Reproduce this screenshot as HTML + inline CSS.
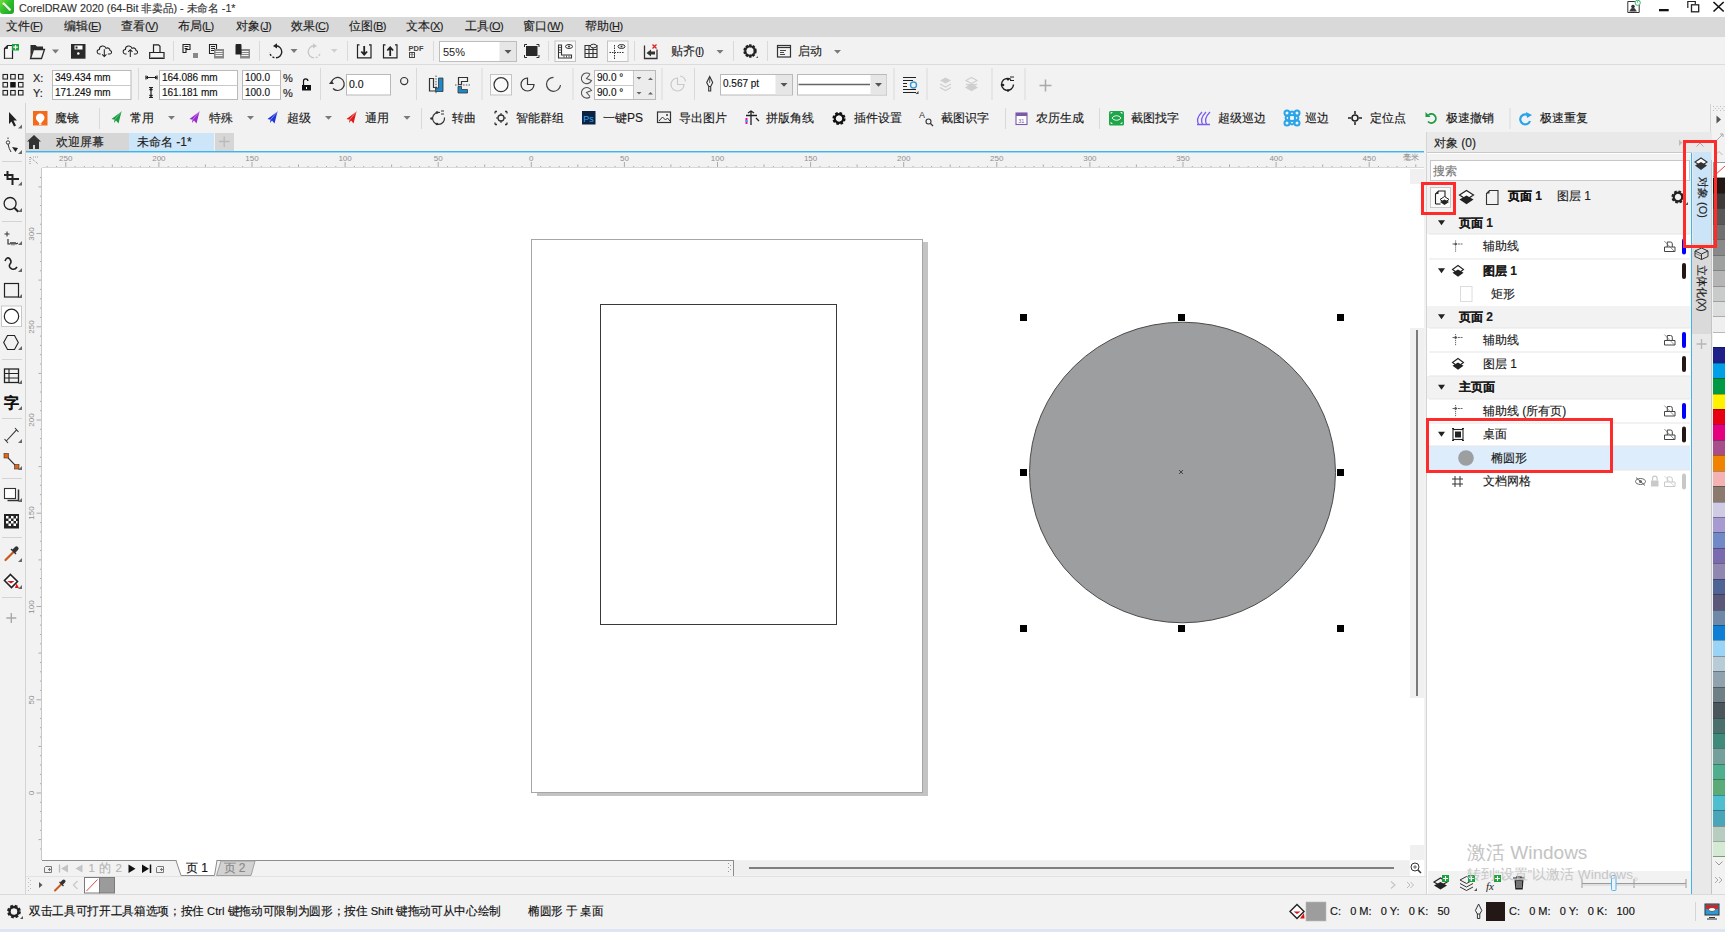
<!DOCTYPE html>
<html><head><meta charset="utf-8">
<style>
*{box-sizing:border-box}
html,body{margin:0;padding:0;width:1725px;height:932px;overflow:hidden;background:#f2f2f2;font-family:"Liberation Sans",sans-serif;font-size:12px;color:#1a1a1a}
.a{position:absolute}
.t{position:absolute;white-space:nowrap;line-height:1;-webkit-text-stroke:0.15px currentColor}
.sep{position:absolute;width:1px;background:#d9d9d9}
svg{position:absolute;overflow:visible}
</style></head><body>

<!-- title bar -->
<div class="a" style="left:0;top:0;width:1725px;height:17px;background:#fff"></div>
<!-- menu bar -->
<div class="a" style="left:0;top:17px;width:1725px;height:20px;background:#d9d9d9"></div>
<!-- standard toolbar -->
<div class="a" style="left:0;top:37px;width:1725px;height:28px;background:#f2f2f2;border-bottom:1px solid #dcdcdc"></div>
<!-- property bar -->
<div class="a" style="left:0;top:65px;width:1725px;height:39px;background:#f2f2f2;border-bottom:1px solid #dcdcdc"></div>
<!-- custom toolbar -->
<div class="a" style="left:26px;top:103px;width:1699px;height:29px;background:#f2f2f2"></div>
<!-- toolbox -->
<div class="a" style="left:0;top:103px;width:26px;height:791px;background:#f2f2f2;border-right:1px solid #d4d4d4"></div>
<!-- doc tabs -->
<div class="a" style="left:26px;top:132px;width:1398px;height:19px;background:#f2f2f2"></div>
<div class="a" style="left:26px;top:133px;width:103px;height:18px;background:#d6d6d6"></div>
<div class="a" style="left:129px;top:133px;width:85px;height:18px;background:#cde5f9"></div>
<div class="a" style="left:215px;top:133px;width:18.5px;height:18px;background:#d6d6d6"></div>
<div class="a" style="left:26px;top:151px;width:1398px;height:1px;background:#3fb5ea"></div><div class="a" style="left:26px;top:152px;width:1398px;height:1px;background:#9fd8f3"></div>
<!-- rulers -->
<div class="a" style="left:26px;top:153px;width:1398px;height:15px;background:#f2f2f2"></div>
<div class="a" style="left:26px;top:168px;width:16px;height:692px;background:#f2f2f2"></div>
<!-- canvas -->
<div class="a" style="left:42px;top:168px;width:1368px;height:692px;background:#fff"></div>
<div class="a" style="left:1410px;top:168px;width:14px;height:692px;background:#fff"></div>
<!-- docker -->
<div class="a" style="left:1426px;top:132px;width:266px;height:762px;background:#fff"></div>
<div class="a" style="left:1692px;top:132px;width:20px;height:762px;background:#e8e8e8"></div>
<!-- palette -->
<div class="a" style="left:1712px;top:132px;width:13px;height:762px;background:#ececec"></div>
<!-- status bar -->
<div class="a" style="left:0;top:894px;width:1725px;height:35px;background:#f2f2f2;border-top:1px solid #d4d4d4"></div>
<div class="a" style="left:0;top:929px;width:1725px;height:3px;background:#dfe6f3"></div>
<svg style="left:0;top:0" width="1725" height="932"><line x1="47.2" y1="166" x2="47.2" y2="167.5" stroke="#aaaaaa" stroke-width="1"/><line x1="56.5" y1="166" x2="56.5" y2="167.5" stroke="#aaaaaa" stroke-width="1"/><line x1="65.8" y1="162" x2="65.8" y2="167.5" stroke="#aaaaaa" stroke-width="1"/><line x1="75.1" y1="166" x2="75.1" y2="167.5" stroke="#aaaaaa" stroke-width="1"/><line x1="84.4" y1="166" x2="84.4" y2="167.5" stroke="#aaaaaa" stroke-width="1"/><line x1="93.7" y1="166" x2="93.7" y2="167.5" stroke="#aaaaaa" stroke-width="1"/><line x1="103.0" y1="166" x2="103.0" y2="167.5" stroke="#aaaaaa" stroke-width="1"/><line x1="112.3" y1="164.5" x2="112.3" y2="167.5" stroke="#aaaaaa" stroke-width="1"/><line x1="121.7" y1="166" x2="121.7" y2="167.5" stroke="#aaaaaa" stroke-width="1"/><line x1="131.0" y1="166" x2="131.0" y2="167.5" stroke="#aaaaaa" stroke-width="1"/><line x1="140.3" y1="166" x2="140.3" y2="167.5" stroke="#aaaaaa" stroke-width="1"/><line x1="149.6" y1="166" x2="149.6" y2="167.5" stroke="#aaaaaa" stroke-width="1"/><line x1="158.9" y1="162" x2="158.9" y2="167.5" stroke="#aaaaaa" stroke-width="1"/><line x1="168.2" y1="166" x2="168.2" y2="167.5" stroke="#aaaaaa" stroke-width="1"/><line x1="177.5" y1="166" x2="177.5" y2="167.5" stroke="#aaaaaa" stroke-width="1"/><line x1="186.8" y1="166" x2="186.8" y2="167.5" stroke="#aaaaaa" stroke-width="1"/><line x1="196.1" y1="166" x2="196.1" y2="167.5" stroke="#aaaaaa" stroke-width="1"/><line x1="205.4" y1="164.5" x2="205.4" y2="167.5" stroke="#aaaaaa" stroke-width="1"/><line x1="214.8" y1="166" x2="214.8" y2="167.5" stroke="#aaaaaa" stroke-width="1"/><line x1="224.1" y1="166" x2="224.1" y2="167.5" stroke="#aaaaaa" stroke-width="1"/><line x1="233.4" y1="166" x2="233.4" y2="167.5" stroke="#aaaaaa" stroke-width="1"/><line x1="242.7" y1="166" x2="242.7" y2="167.5" stroke="#aaaaaa" stroke-width="1"/><line x1="252.0" y1="162" x2="252.0" y2="167.5" stroke="#aaaaaa" stroke-width="1"/><line x1="261.3" y1="166" x2="261.3" y2="167.5" stroke="#aaaaaa" stroke-width="1"/><line x1="270.6" y1="166" x2="270.6" y2="167.5" stroke="#aaaaaa" stroke-width="1"/><line x1="279.9" y1="166" x2="279.9" y2="167.5" stroke="#aaaaaa" stroke-width="1"/><line x1="289.2" y1="166" x2="289.2" y2="167.5" stroke="#aaaaaa" stroke-width="1"/><line x1="298.5" y1="164.5" x2="298.5" y2="167.5" stroke="#aaaaaa" stroke-width="1"/><line x1="307.9" y1="166" x2="307.9" y2="167.5" stroke="#aaaaaa" stroke-width="1"/><line x1="317.2" y1="166" x2="317.2" y2="167.5" stroke="#aaaaaa" stroke-width="1"/><line x1="326.5" y1="166" x2="326.5" y2="167.5" stroke="#aaaaaa" stroke-width="1"/><line x1="335.8" y1="166" x2="335.8" y2="167.5" stroke="#aaaaaa" stroke-width="1"/><line x1="345.1" y1="162" x2="345.1" y2="167.5" stroke="#aaaaaa" stroke-width="1"/><line x1="354.4" y1="166" x2="354.4" y2="167.5" stroke="#aaaaaa" stroke-width="1"/><line x1="363.7" y1="166" x2="363.7" y2="167.5" stroke="#aaaaaa" stroke-width="1"/><line x1="373.0" y1="166" x2="373.0" y2="167.5" stroke="#aaaaaa" stroke-width="1"/><line x1="382.3" y1="166" x2="382.3" y2="167.5" stroke="#aaaaaa" stroke-width="1"/><line x1="391.6" y1="164.5" x2="391.6" y2="167.5" stroke="#aaaaaa" stroke-width="1"/><line x1="401.0" y1="166" x2="401.0" y2="167.5" stroke="#aaaaaa" stroke-width="1"/><line x1="410.3" y1="166" x2="410.3" y2="167.5" stroke="#aaaaaa" stroke-width="1"/><line x1="419.6" y1="166" x2="419.6" y2="167.5" stroke="#aaaaaa" stroke-width="1"/><line x1="428.9" y1="166" x2="428.9" y2="167.5" stroke="#aaaaaa" stroke-width="1"/><line x1="438.2" y1="162" x2="438.2" y2="167.5" stroke="#aaaaaa" stroke-width="1"/><line x1="447.5" y1="166" x2="447.5" y2="167.5" stroke="#aaaaaa" stroke-width="1"/><line x1="456.8" y1="166" x2="456.8" y2="167.5" stroke="#aaaaaa" stroke-width="1"/><line x1="466.1" y1="166" x2="466.1" y2="167.5" stroke="#aaaaaa" stroke-width="1"/><line x1="475.4" y1="166" x2="475.4" y2="167.5" stroke="#aaaaaa" stroke-width="1"/><line x1="484.7" y1="164.5" x2="484.7" y2="167.5" stroke="#aaaaaa" stroke-width="1"/><line x1="494.1" y1="166" x2="494.1" y2="167.5" stroke="#aaaaaa" stroke-width="1"/><line x1="503.4" y1="166" x2="503.4" y2="167.5" stroke="#aaaaaa" stroke-width="1"/><line x1="512.7" y1="166" x2="512.7" y2="167.5" stroke="#aaaaaa" stroke-width="1"/><line x1="522.0" y1="166" x2="522.0" y2="167.5" stroke="#aaaaaa" stroke-width="1"/><line x1="531.3" y1="162" x2="531.3" y2="167.5" stroke="#aaaaaa" stroke-width="1"/><line x1="540.6" y1="166" x2="540.6" y2="167.5" stroke="#aaaaaa" stroke-width="1"/><line x1="549.9" y1="166" x2="549.9" y2="167.5" stroke="#aaaaaa" stroke-width="1"/><line x1="559.2" y1="166" x2="559.2" y2="167.5" stroke="#aaaaaa" stroke-width="1"/><line x1="568.5" y1="166" x2="568.5" y2="167.5" stroke="#aaaaaa" stroke-width="1"/><line x1="577.8" y1="164.5" x2="577.8" y2="167.5" stroke="#aaaaaa" stroke-width="1"/><line x1="587.2" y1="166" x2="587.2" y2="167.5" stroke="#aaaaaa" stroke-width="1"/><line x1="596.5" y1="166" x2="596.5" y2="167.5" stroke="#aaaaaa" stroke-width="1"/><line x1="605.8" y1="166" x2="605.8" y2="167.5" stroke="#aaaaaa" stroke-width="1"/><line x1="615.1" y1="166" x2="615.1" y2="167.5" stroke="#aaaaaa" stroke-width="1"/><line x1="624.4" y1="162" x2="624.4" y2="167.5" stroke="#aaaaaa" stroke-width="1"/><line x1="633.7" y1="166" x2="633.7" y2="167.5" stroke="#aaaaaa" stroke-width="1"/><line x1="643.0" y1="166" x2="643.0" y2="167.5" stroke="#aaaaaa" stroke-width="1"/><line x1="652.3" y1="166" x2="652.3" y2="167.5" stroke="#aaaaaa" stroke-width="1"/><line x1="661.6" y1="166" x2="661.6" y2="167.5" stroke="#aaaaaa" stroke-width="1"/><line x1="670.9" y1="164.5" x2="670.9" y2="167.5" stroke="#aaaaaa" stroke-width="1"/><line x1="680.3" y1="166" x2="680.3" y2="167.5" stroke="#aaaaaa" stroke-width="1"/><line x1="689.6" y1="166" x2="689.6" y2="167.5" stroke="#aaaaaa" stroke-width="1"/><line x1="698.9" y1="166" x2="698.9" y2="167.5" stroke="#aaaaaa" stroke-width="1"/><line x1="708.2" y1="166" x2="708.2" y2="167.5" stroke="#aaaaaa" stroke-width="1"/><line x1="717.5" y1="162" x2="717.5" y2="167.5" stroke="#aaaaaa" stroke-width="1"/><line x1="726.8" y1="166" x2="726.8" y2="167.5" stroke="#aaaaaa" stroke-width="1"/><line x1="736.1" y1="166" x2="736.1" y2="167.5" stroke="#aaaaaa" stroke-width="1"/><line x1="745.4" y1="166" x2="745.4" y2="167.5" stroke="#aaaaaa" stroke-width="1"/><line x1="754.7" y1="166" x2="754.7" y2="167.5" stroke="#aaaaaa" stroke-width="1"/><line x1="764.0" y1="164.5" x2="764.0" y2="167.5" stroke="#aaaaaa" stroke-width="1"/><line x1="773.4" y1="166" x2="773.4" y2="167.5" stroke="#aaaaaa" stroke-width="1"/><line x1="782.7" y1="166" x2="782.7" y2="167.5" stroke="#aaaaaa" stroke-width="1"/><line x1="792.0" y1="166" x2="792.0" y2="167.5" stroke="#aaaaaa" stroke-width="1"/><line x1="801.3" y1="166" x2="801.3" y2="167.5" stroke="#aaaaaa" stroke-width="1"/><line x1="810.6" y1="162" x2="810.6" y2="167.5" stroke="#aaaaaa" stroke-width="1"/><line x1="819.9" y1="166" x2="819.9" y2="167.5" stroke="#aaaaaa" stroke-width="1"/><line x1="829.2" y1="166" x2="829.2" y2="167.5" stroke="#aaaaaa" stroke-width="1"/><line x1="838.5" y1="166" x2="838.5" y2="167.5" stroke="#aaaaaa" stroke-width="1"/><line x1="847.8" y1="166" x2="847.8" y2="167.5" stroke="#aaaaaa" stroke-width="1"/><line x1="857.1" y1="164.5" x2="857.1" y2="167.5" stroke="#aaaaaa" stroke-width="1"/><line x1="866.5" y1="166" x2="866.5" y2="167.5" stroke="#aaaaaa" stroke-width="1"/><line x1="875.8" y1="166" x2="875.8" y2="167.5" stroke="#aaaaaa" stroke-width="1"/><line x1="885.1" y1="166" x2="885.1" y2="167.5" stroke="#aaaaaa" stroke-width="1"/><line x1="894.4" y1="166" x2="894.4" y2="167.5" stroke="#aaaaaa" stroke-width="1"/><line x1="903.7" y1="162" x2="903.7" y2="167.5" stroke="#aaaaaa" stroke-width="1"/><line x1="913.0" y1="166" x2="913.0" y2="167.5" stroke="#aaaaaa" stroke-width="1"/><line x1="922.3" y1="166" x2="922.3" y2="167.5" stroke="#aaaaaa" stroke-width="1"/><line x1="931.6" y1="166" x2="931.6" y2="167.5" stroke="#aaaaaa" stroke-width="1"/><line x1="940.9" y1="166" x2="940.9" y2="167.5" stroke="#aaaaaa" stroke-width="1"/><line x1="950.2" y1="164.5" x2="950.2" y2="167.5" stroke="#aaaaaa" stroke-width="1"/><line x1="959.6" y1="166" x2="959.6" y2="167.5" stroke="#aaaaaa" stroke-width="1"/><line x1="968.9" y1="166" x2="968.9" y2="167.5" stroke="#aaaaaa" stroke-width="1"/><line x1="978.2" y1="166" x2="978.2" y2="167.5" stroke="#aaaaaa" stroke-width="1"/><line x1="987.5" y1="166" x2="987.5" y2="167.5" stroke="#aaaaaa" stroke-width="1"/><line x1="996.8" y1="162" x2="996.8" y2="167.5" stroke="#aaaaaa" stroke-width="1"/><line x1="1006.1" y1="166" x2="1006.1" y2="167.5" stroke="#aaaaaa" stroke-width="1"/><line x1="1015.4" y1="166" x2="1015.4" y2="167.5" stroke="#aaaaaa" stroke-width="1"/><line x1="1024.7" y1="166" x2="1024.7" y2="167.5" stroke="#aaaaaa" stroke-width="1"/><line x1="1034.0" y1="166" x2="1034.0" y2="167.5" stroke="#aaaaaa" stroke-width="1"/><line x1="1043.3" y1="164.5" x2="1043.3" y2="167.5" stroke="#aaaaaa" stroke-width="1"/><line x1="1052.7" y1="166" x2="1052.7" y2="167.5" stroke="#aaaaaa" stroke-width="1"/><line x1="1062.0" y1="166" x2="1062.0" y2="167.5" stroke="#aaaaaa" stroke-width="1"/><line x1="1071.3" y1="166" x2="1071.3" y2="167.5" stroke="#aaaaaa" stroke-width="1"/><line x1="1080.6" y1="166" x2="1080.6" y2="167.5" stroke="#aaaaaa" stroke-width="1"/><line x1="1089.9" y1="162" x2="1089.9" y2="167.5" stroke="#aaaaaa" stroke-width="1"/><line x1="1099.2" y1="166" x2="1099.2" y2="167.5" stroke="#aaaaaa" stroke-width="1"/><line x1="1108.5" y1="166" x2="1108.5" y2="167.5" stroke="#aaaaaa" stroke-width="1"/><line x1="1117.8" y1="166" x2="1117.8" y2="167.5" stroke="#aaaaaa" stroke-width="1"/><line x1="1127.1" y1="166" x2="1127.1" y2="167.5" stroke="#aaaaaa" stroke-width="1"/><line x1="1136.4" y1="164.5" x2="1136.4" y2="167.5" stroke="#aaaaaa" stroke-width="1"/><line x1="1145.8" y1="166" x2="1145.8" y2="167.5" stroke="#aaaaaa" stroke-width="1"/><line x1="1155.1" y1="166" x2="1155.1" y2="167.5" stroke="#aaaaaa" stroke-width="1"/><line x1="1164.4" y1="166" x2="1164.4" y2="167.5" stroke="#aaaaaa" stroke-width="1"/><line x1="1173.7" y1="166" x2="1173.7" y2="167.5" stroke="#aaaaaa" stroke-width="1"/><line x1="1183.0" y1="162" x2="1183.0" y2="167.5" stroke="#aaaaaa" stroke-width="1"/><line x1="1192.3" y1="166" x2="1192.3" y2="167.5" stroke="#aaaaaa" stroke-width="1"/><line x1="1201.6" y1="166" x2="1201.6" y2="167.5" stroke="#aaaaaa" stroke-width="1"/><line x1="1210.9" y1="166" x2="1210.9" y2="167.5" stroke="#aaaaaa" stroke-width="1"/><line x1="1220.2" y1="166" x2="1220.2" y2="167.5" stroke="#aaaaaa" stroke-width="1"/><line x1="1229.5" y1="164.5" x2="1229.5" y2="167.5" stroke="#aaaaaa" stroke-width="1"/><line x1="1238.9" y1="166" x2="1238.9" y2="167.5" stroke="#aaaaaa" stroke-width="1"/><line x1="1248.2" y1="166" x2="1248.2" y2="167.5" stroke="#aaaaaa" stroke-width="1"/><line x1="1257.5" y1="166" x2="1257.5" y2="167.5" stroke="#aaaaaa" stroke-width="1"/><line x1="1266.8" y1="166" x2="1266.8" y2="167.5" stroke="#aaaaaa" stroke-width="1"/><line x1="1276.1" y1="162" x2="1276.1" y2="167.5" stroke="#aaaaaa" stroke-width="1"/><line x1="1285.4" y1="166" x2="1285.4" y2="167.5" stroke="#aaaaaa" stroke-width="1"/><line x1="1294.7" y1="166" x2="1294.7" y2="167.5" stroke="#aaaaaa" stroke-width="1"/><line x1="1304.0" y1="166" x2="1304.0" y2="167.5" stroke="#aaaaaa" stroke-width="1"/><line x1="1313.3" y1="166" x2="1313.3" y2="167.5" stroke="#aaaaaa" stroke-width="1"/><line x1="1322.7" y1="164.5" x2="1322.7" y2="167.5" stroke="#aaaaaa" stroke-width="1"/><line x1="1332.0" y1="166" x2="1332.0" y2="167.5" stroke="#aaaaaa" stroke-width="1"/><line x1="1341.3" y1="166" x2="1341.3" y2="167.5" stroke="#aaaaaa" stroke-width="1"/><line x1="1350.6" y1="166" x2="1350.6" y2="167.5" stroke="#aaaaaa" stroke-width="1"/><line x1="1359.9" y1="166" x2="1359.9" y2="167.5" stroke="#aaaaaa" stroke-width="1"/><line x1="1369.2" y1="162" x2="1369.2" y2="167.5" stroke="#aaaaaa" stroke-width="1"/><line x1="1378.5" y1="166" x2="1378.5" y2="167.5" stroke="#aaaaaa" stroke-width="1"/><line x1="1387.8" y1="166" x2="1387.8" y2="167.5" stroke="#aaaaaa" stroke-width="1"/><line x1="1397.1" y1="166" x2="1397.1" y2="167.5" stroke="#aaaaaa" stroke-width="1"/><line x1="1406.4" y1="166" x2="1406.4" y2="167.5" stroke="#aaaaaa" stroke-width="1"/><line x1="1415.8" y1="164.5" x2="1415.8" y2="167.5" stroke="#aaaaaa" stroke-width="1"/><line x1="40" y1="849.0" x2="41.5" y2="849.0" stroke="#aaaaaa" stroke-width="1"/><line x1="38.5" y1="839.6" x2="41.5" y2="839.6" stroke="#aaaaaa" stroke-width="1"/><line x1="40" y1="830.3" x2="41.5" y2="830.3" stroke="#aaaaaa" stroke-width="1"/><line x1="40" y1="821.0" x2="41.5" y2="821.0" stroke="#aaaaaa" stroke-width="1"/><line x1="40" y1="811.6" x2="41.5" y2="811.6" stroke="#aaaaaa" stroke-width="1"/><line x1="40" y1="802.3" x2="41.5" y2="802.3" stroke="#aaaaaa" stroke-width="1"/><line x1="36.5" y1="793.0" x2="41.5" y2="793.0" stroke="#aaaaaa" stroke-width="1"/><line x1="40" y1="783.7" x2="41.5" y2="783.7" stroke="#aaaaaa" stroke-width="1"/><line x1="40" y1="774.4" x2="41.5" y2="774.4" stroke="#aaaaaa" stroke-width="1"/><line x1="40" y1="765.0" x2="41.5" y2="765.0" stroke="#aaaaaa" stroke-width="1"/><line x1="40" y1="755.7" x2="41.5" y2="755.7" stroke="#aaaaaa" stroke-width="1"/><line x1="38.5" y1="746.4" x2="41.5" y2="746.4" stroke="#aaaaaa" stroke-width="1"/><line x1="40" y1="737.0" x2="41.5" y2="737.0" stroke="#aaaaaa" stroke-width="1"/><line x1="40" y1="727.7" x2="41.5" y2="727.7" stroke="#aaaaaa" stroke-width="1"/><line x1="40" y1="718.4" x2="41.5" y2="718.4" stroke="#aaaaaa" stroke-width="1"/><line x1="40" y1="709.1" x2="41.5" y2="709.1" stroke="#aaaaaa" stroke-width="1"/><line x1="36.5" y1="699.8" x2="41.5" y2="699.8" stroke="#aaaaaa" stroke-width="1"/><line x1="40" y1="690.4" x2="41.5" y2="690.4" stroke="#aaaaaa" stroke-width="1"/><line x1="40" y1="681.1" x2="41.5" y2="681.1" stroke="#aaaaaa" stroke-width="1"/><line x1="40" y1="671.8" x2="41.5" y2="671.8" stroke="#aaaaaa" stroke-width="1"/><line x1="40" y1="662.5" x2="41.5" y2="662.5" stroke="#aaaaaa" stroke-width="1"/><line x1="38.5" y1="653.1" x2="41.5" y2="653.1" stroke="#aaaaaa" stroke-width="1"/><line x1="40" y1="643.8" x2="41.5" y2="643.8" stroke="#aaaaaa" stroke-width="1"/><line x1="40" y1="634.5" x2="41.5" y2="634.5" stroke="#aaaaaa" stroke-width="1"/><line x1="40" y1="625.1" x2="41.5" y2="625.1" stroke="#aaaaaa" stroke-width="1"/><line x1="40" y1="615.8" x2="41.5" y2="615.8" stroke="#aaaaaa" stroke-width="1"/><line x1="36.5" y1="606.5" x2="41.5" y2="606.5" stroke="#aaaaaa" stroke-width="1"/><line x1="40" y1="597.2" x2="41.5" y2="597.2" stroke="#aaaaaa" stroke-width="1"/><line x1="40" y1="587.9" x2="41.5" y2="587.9" stroke="#aaaaaa" stroke-width="1"/><line x1="40" y1="578.5" x2="41.5" y2="578.5" stroke="#aaaaaa" stroke-width="1"/><line x1="40" y1="569.2" x2="41.5" y2="569.2" stroke="#aaaaaa" stroke-width="1"/><line x1="38.5" y1="559.9" x2="41.5" y2="559.9" stroke="#aaaaaa" stroke-width="1"/><line x1="40" y1="550.5" x2="41.5" y2="550.5" stroke="#aaaaaa" stroke-width="1"/><line x1="40" y1="541.2" x2="41.5" y2="541.2" stroke="#aaaaaa" stroke-width="1"/><line x1="40" y1="531.9" x2="41.5" y2="531.9" stroke="#aaaaaa" stroke-width="1"/><line x1="40" y1="522.6" x2="41.5" y2="522.6" stroke="#aaaaaa" stroke-width="1"/><line x1="36.5" y1="513.2" x2="41.5" y2="513.2" stroke="#aaaaaa" stroke-width="1"/><line x1="40" y1="503.9" x2="41.5" y2="503.9" stroke="#aaaaaa" stroke-width="1"/><line x1="40" y1="494.6" x2="41.5" y2="494.6" stroke="#aaaaaa" stroke-width="1"/><line x1="40" y1="485.3" x2="41.5" y2="485.3" stroke="#aaaaaa" stroke-width="1"/><line x1="40" y1="475.9" x2="41.5" y2="475.9" stroke="#aaaaaa" stroke-width="1"/><line x1="38.5" y1="466.6" x2="41.5" y2="466.6" stroke="#aaaaaa" stroke-width="1"/><line x1="40" y1="457.3" x2="41.5" y2="457.3" stroke="#aaaaaa" stroke-width="1"/><line x1="40" y1="448.0" x2="41.5" y2="448.0" stroke="#aaaaaa" stroke-width="1"/><line x1="40" y1="438.6" x2="41.5" y2="438.6" stroke="#aaaaaa" stroke-width="1"/><line x1="40" y1="429.3" x2="41.5" y2="429.3" stroke="#aaaaaa" stroke-width="1"/><line x1="36.5" y1="420.0" x2="41.5" y2="420.0" stroke="#aaaaaa" stroke-width="1"/><line x1="40" y1="410.7" x2="41.5" y2="410.7" stroke="#aaaaaa" stroke-width="1"/><line x1="40" y1="401.4" x2="41.5" y2="401.4" stroke="#aaaaaa" stroke-width="1"/><line x1="40" y1="392.0" x2="41.5" y2="392.0" stroke="#aaaaaa" stroke-width="1"/><line x1="40" y1="382.7" x2="41.5" y2="382.7" stroke="#aaaaaa" stroke-width="1"/><line x1="38.5" y1="373.4" x2="41.5" y2="373.4" stroke="#aaaaaa" stroke-width="1"/><line x1="40" y1="364.1" x2="41.5" y2="364.1" stroke="#aaaaaa" stroke-width="1"/><line x1="40" y1="354.7" x2="41.5" y2="354.7" stroke="#aaaaaa" stroke-width="1"/><line x1="40" y1="345.4" x2="41.5" y2="345.4" stroke="#aaaaaa" stroke-width="1"/><line x1="40" y1="336.1" x2="41.5" y2="336.1" stroke="#aaaaaa" stroke-width="1"/><line x1="36.5" y1="326.8" x2="41.5" y2="326.8" stroke="#aaaaaa" stroke-width="1"/><line x1="40" y1="317.4" x2="41.5" y2="317.4" stroke="#aaaaaa" stroke-width="1"/><line x1="40" y1="308.1" x2="41.5" y2="308.1" stroke="#aaaaaa" stroke-width="1"/><line x1="40" y1="298.8" x2="41.5" y2="298.8" stroke="#aaaaaa" stroke-width="1"/><line x1="40" y1="289.4" x2="41.5" y2="289.4" stroke="#aaaaaa" stroke-width="1"/><line x1="38.5" y1="280.1" x2="41.5" y2="280.1" stroke="#aaaaaa" stroke-width="1"/><line x1="40" y1="270.8" x2="41.5" y2="270.8" stroke="#aaaaaa" stroke-width="1"/><line x1="40" y1="261.5" x2="41.5" y2="261.5" stroke="#aaaaaa" stroke-width="1"/><line x1="40" y1="252.1" x2="41.5" y2="252.1" stroke="#aaaaaa" stroke-width="1"/><line x1="40" y1="242.8" x2="41.5" y2="242.8" stroke="#aaaaaa" stroke-width="1"/><line x1="36.5" y1="233.5" x2="41.5" y2="233.5" stroke="#aaaaaa" stroke-width="1"/><line x1="40" y1="224.2" x2="41.5" y2="224.2" stroke="#aaaaaa" stroke-width="1"/><line x1="40" y1="214.9" x2="41.5" y2="214.9" stroke="#aaaaaa" stroke-width="1"/><line x1="40" y1="205.5" x2="41.5" y2="205.5" stroke="#aaaaaa" stroke-width="1"/><line x1="40" y1="196.2" x2="41.5" y2="196.2" stroke="#aaaaaa" stroke-width="1"/><line x1="38.5" y1="186.9" x2="41.5" y2="186.9" stroke="#aaaaaa" stroke-width="1"/><line x1="40" y1="177.5" x2="41.5" y2="177.5" stroke="#aaaaaa" stroke-width="1"/></svg><div class="t" style="left:45.8px;top:155px;width:40px;text-align:center;font-size:8px;color:#8f8f8f;-webkit-text-stroke:0">250</div><div class="t" style="left:138.9px;top:155px;width:40px;text-align:center;font-size:8px;color:#8f8f8f;-webkit-text-stroke:0">200</div><div class="t" style="left:232.0px;top:155px;width:40px;text-align:center;font-size:8px;color:#8f8f8f;-webkit-text-stroke:0">150</div><div class="t" style="left:325.1px;top:155px;width:40px;text-align:center;font-size:8px;color:#8f8f8f;-webkit-text-stroke:0">100</div><div class="t" style="left:418.2px;top:155px;width:40px;text-align:center;font-size:8px;color:#8f8f8f;-webkit-text-stroke:0">50</div><div class="t" style="left:511.3px;top:155px;width:40px;text-align:center;font-size:8px;color:#8f8f8f;-webkit-text-stroke:0">0</div><div class="t" style="left:604.4px;top:155px;width:40px;text-align:center;font-size:8px;color:#8f8f8f;-webkit-text-stroke:0">50</div><div class="t" style="left:697.5px;top:155px;width:40px;text-align:center;font-size:8px;color:#8f8f8f;-webkit-text-stroke:0">100</div><div class="t" style="left:790.6px;top:155px;width:40px;text-align:center;font-size:8px;color:#8f8f8f;-webkit-text-stroke:0">150</div><div class="t" style="left:883.7px;top:155px;width:40px;text-align:center;font-size:8px;color:#8f8f8f;-webkit-text-stroke:0">200</div><div class="t" style="left:976.8px;top:155px;width:40px;text-align:center;font-size:8px;color:#8f8f8f;-webkit-text-stroke:0">250</div><div class="t" style="left:1069.9px;top:155px;width:40px;text-align:center;font-size:8px;color:#8f8f8f;-webkit-text-stroke:0">300</div><div class="t" style="left:1163.0px;top:155px;width:40px;text-align:center;font-size:8px;color:#8f8f8f;-webkit-text-stroke:0">350</div><div class="t" style="left:1256.1px;top:155px;width:40px;text-align:center;font-size:8px;color:#8f8f8f;-webkit-text-stroke:0">400</div><div class="t" style="left:1349.2px;top:155px;width:40px;text-align:center;font-size:8px;color:#8f8f8f;-webkit-text-stroke:0">450</div><div class="t" style="left:1403px;top:154px;font-size:8px;color:#8f8f8f;-webkit-text-stroke:0">毫米</div><div class="t" style="left:13px;top:788.0px;width:40px;text-align:center;font-size:8px;color:#8f8f8f;-webkit-text-stroke:0;transform:rotate(-90deg);transform-origin:20px 5px;left:13px">0</div><div class="t" style="left:13px;top:694.8px;width:40px;text-align:center;font-size:8px;color:#8f8f8f;-webkit-text-stroke:0;transform:rotate(-90deg);transform-origin:20px 5px;left:13px">50</div><div class="t" style="left:13px;top:601.5px;width:40px;text-align:center;font-size:8px;color:#8f8f8f;-webkit-text-stroke:0;transform:rotate(-90deg);transform-origin:20px 5px;left:13px">100</div><div class="t" style="left:13px;top:508.2px;width:40px;text-align:center;font-size:8px;color:#8f8f8f;-webkit-text-stroke:0;transform:rotate(-90deg);transform-origin:20px 5px;left:13px">150</div><div class="t" style="left:13px;top:415.0px;width:40px;text-align:center;font-size:8px;color:#8f8f8f;-webkit-text-stroke:0;transform:rotate(-90deg);transform-origin:20px 5px;left:13px">200</div><div class="t" style="left:13px;top:321.8px;width:40px;text-align:center;font-size:8px;color:#8f8f8f;-webkit-text-stroke:0;transform:rotate(-90deg);transform-origin:20px 5px;left:13px">250</div><div class="t" style="left:13px;top:228.5px;width:40px;text-align:center;font-size:8px;color:#8f8f8f;-webkit-text-stroke:0;transform:rotate(-90deg);transform-origin:20px 5px;left:13px">300</div>
<!-- page -->
<div class="a" style="left:537px;top:242px;width:391px;height:554px;background:#c3c3c3"></div>
<div class="a" style="left:531px;top:239px;width:392px;height:554px;background:#fff;border:1px solid #a6a6a6"></div>
<div class="a" style="left:600px;top:304px;width:237px;height:321px;border:1px solid #3c3838"></div>
<svg style="left:0;top:0" width="1725" height="932">
<ellipse cx="1182.5" cy="472.5" rx="153" ry="150.3" fill="#9d9ea0" stroke="#4a4a4a" stroke-width="1"/>
<path d="M1179 470 l4 4 M1183 470 l-4 4" stroke="#444" stroke-width="1"/>
<rect x="1020" y="314" width="7" height="7" fill="#000"/>
<rect x="1178" y="314" width="7" height="7" fill="#000"/>
<rect x="1337" y="314" width="7" height="7" fill="#000"/>
<rect x="1020" y="469" width="7" height="7" fill="#000"/>
<rect x="1337" y="469" width="7" height="7" fill="#000"/>
<rect x="1020" y="625" width="7" height="7" fill="#000"/>
<rect x="1178" y="625" width="7" height="7" fill="#000"/>
<rect x="1337" y="625" width="7" height="7" fill="#000"/>
</svg>
<!-- scrollbar vertical -->
<div class="a" style="left:1410px;top:169px;width:14px;height:15px;background:#f0f0f0"></div>
<div class="a" style="left:1410px;top:328px;width:14px;height:370px;background:#f0f0f0"></div>
<div class="a" style="left:1416px;top:330px;width:2px;height:366px;background:#7a7a7a"></div>
<div class="a" style="left:1410px;top:845px;width:14px;height:15px;background:#f0f0f0"></div>
<div class="a" style="left:41px;top:168px;width:1px;height:692px;background:#c8c8c8"></div>
<div class="a" style="left:42px;top:167px;width:1382px;height:1px;background:#d8d8d8"></div>
<!-- title -->
<svg style="left:0;top:0" width="16" height="16"><defs><linearGradient id="lg" x1="0" y1="0" x2="1" y2="1"><stop offset="0" stop-color="#7fe040"/><stop offset="0.5" stop-color="#2fc02a"/><stop offset="1" stop-color="#20a028"/></linearGradient></defs><rect x="0" y="-3" width="14" height="17" rx="3" fill="url(#lg)"/><path d="M3.6 3.6 L9.6 9.6" stroke="#e8f0e8" stroke-width="2.6" stroke-linecap="round"/><path d="M3 4.8 L8.8 10.6" stroke="#1a6a1a" stroke-width="0.5"/></svg>
<div class="t" style="left:19px;top:2.5px;font-size:11px;color:#333;transform-origin:0 0;transform:scaleX(0.975)">CorelDRAW 2020 (64-Bit 非卖品) - 未命名 -1*</div>
<svg style="left:0;top:0" width="1725" height="17">
<path d="M1627.8 12.5 v-11 h7 M1639.2 5 v7.5 h-11.4" fill="none" stroke="#333" stroke-width="1"/>
<circle cx="1633" cy="6.5" r="1.8" fill="#333"/><path d="M1630.5 10.8 q0 -2.6 2.5 -2.6 q2.5 0 2.5 2.6 z M1629.3 11 h7.5" fill="#333" stroke="#333" stroke-width="0.8"/>
<circle cx="1637.7" cy="2.8" r="2.6" fill="#fff" stroke="#3cb56a" stroke-width="1"/><path d="M1637.7 0.8 v2" stroke="#3cb56a" stroke-width="0.9"/>
<rect x="1659" y="9" width="9.7" height="2.3" fill="#111"/>
<path d="M1687.8 8 v-6.5 h7.5 v2.5" fill="none" stroke="#222" stroke-width="1.2"/>
<rect x="1691.5" y="4.8" width="7.2" height="7" fill="#fff" stroke="#222" stroke-width="1.3"/>
<path d="M1713.5 2 L1723.7 11.5 M1723.7 2 L1713.5 11.5" stroke="#111" stroke-width="1.6"/>
</svg>
<!-- menu -->
<div class="t" style="left:6px;top:20px;font-size:12px;color:#1e1e1e">文件<span style="font-size:11px;letter-spacing:-0.6px">(<u>F</u>)</span></div>
<div class="t" style="left:64px;top:20px;font-size:12px;color:#1e1e1e">编辑<span style="font-size:11px;letter-spacing:-0.6px">(<u>E</u>)</span></div>
<div class="t" style="left:121px;top:20px;font-size:12px;color:#1e1e1e">查看<span style="font-size:11px;letter-spacing:-0.6px">(<u>V</u>)</span></div>
<div class="t" style="left:178px;top:20px;font-size:12px;color:#1e1e1e">布局<span style="font-size:11px;letter-spacing:-0.6px">(<u>L</u>)</span></div>
<div class="t" style="left:236px;top:20px;font-size:12px;color:#1e1e1e">对象<span style="font-size:11px;letter-spacing:-0.6px">(<u>J</u>)</span></div>
<div class="t" style="left:291px;top:20px;font-size:12px;color:#1e1e1e">效果<span style="font-size:11px;letter-spacing:-0.6px">(<u>C</u>)</span></div>
<div class="t" style="left:349px;top:20px;font-size:12px;color:#1e1e1e">位图<span style="font-size:11px;letter-spacing:-0.6px">(<u>B</u>)</span></div>
<div class="t" style="left:406px;top:20px;font-size:12px;color:#1e1e1e">文本<span style="font-size:11px;letter-spacing:-0.6px">(<u>X</u>)</span></div>
<div class="t" style="left:465px;top:20px;font-size:12px;color:#1e1e1e">工具<span style="font-size:11px;letter-spacing:-0.6px">(<u>O</u>)</span></div>
<div class="t" style="left:523px;top:20px;font-size:12px;color:#1e1e1e">窗口<span style="font-size:11px;letter-spacing:-0.6px">(<u>W</u>)</span></div>
<div class="t" style="left:585px;top:20px;font-size:12px;color:#1e1e1e">帮助<span style="font-size:11px;letter-spacing:-0.6px">(<u>H</u>)</span></div>
<svg style="left:0;top:0" width="1725" height="65">
<g fill="none" stroke="#222" stroke-width="1.2">
<!-- new -->
<path d="M7.5 45.5 H12.5 V58.5 H4.5 V48.5 Z" fill="#f7f7f7"/>
<path d="M4.5 48.5 h3 v-3" fill="#333" stroke-width="0.8"/>
<path d="M5 58 h7" stroke="#999" stroke-width="1"/>
</g>
<rect x="12" y="44" width="7" height="6.5" fill="#1aa23c"/>
<path d="M15.5 45 v4.5 M13.3 47.2 h4.5" stroke="#fff" stroke-width="1.2"/>
<!-- open -->
<path d="M30.5 45 h5 l1.5 1.5 h6 v3 h-10 l-2.5 9 Z" fill="#2b2b2b"/>
<path d="M33.5 49.5 h11 l-3 9 h-11 Z" fill="#f2f2f2" stroke="#2b2b2b" stroke-width="1.3"/>
<path d="M52 49.5 h7 l-3.5 4 z" fill="#7a7a7a"/>
<!-- save -->
<path d="M71 44 h14.5 v14.7 h-14.5 v-11 z" fill="#2a2a2a"/>
<rect x="74.5" y="45.5" width="8" height="4" fill="#fff"/>
<rect x="75.5" y="46.5" width="2" height="2" fill="#2a2a2a"/>
<circle cx="78.3" cy="53.5" r="1.3" fill="#fff"/>
<!-- cloud down -->
<g fill="none" stroke="#222" stroke-width="1.2">
<g transform="translate(104.3 51) scale(0.85) translate(-104.3 -51)"><path d="M100 54.5 h-1.5 a2.6 2.6 0 0 1 0 -5.2 a4 4 0 0 1 7.8 -1.4 a3 3 0 0 1 4.7 2.5 a2 2 0 0 1 -0.5 4.1 h-2"/>
<path d="M104.3 49 v8.5 M101.8 55 l2.5 2.6 l2.5 -2.6"/></g>
<!-- cloud up -->
<g transform="translate(130.3 51) scale(0.85) translate(-130.3 -51)"><path d="M126 54.5 h-1.5 a2.6 2.6 0 0 1 0 -5.2 a4 4 0 0 1 7.8 -1.4 a3 3 0 0 1 4.7 2.5 a2 2 0 0 1 -0.5 4.1 h-2"/>
<path d="M130.3 49.5 v8.5 M127.8 52 l2.5 -2.6 l2.5 2.6"/></g>
<!-- print -->
<path d="M153.5 52.5 v-7.7 h5 l1.5 1.5 v6.2"/>
<path d="M149.7 52.5 h14.3 v6 h-14.3 z"/>
</g>
<path d="M150.5 57.5 h13" stroke="#888" stroke-width="1"/>
<!-- sep -->
<rect x="173" y="41" width="1" height="20" fill="#d9d9d9"/>
<!-- copy props 1 -->
<g fill="none" stroke="#222" stroke-width="1.1">
<path d="M183 44.5 h7 v5 h-4 v3 h-3 z"/><path d="M184.5 46.5 h4 M184.5 48.5 h3"/>
<path d="M209.5 44.5 h7 v9 h-7 z"/><path d="M211 46.5 h4 M211 48.5 h4 M211 50.5 h4"/>
</g>
<g fill="#888" >
<rect x="193" y="53" width="5" height="5"/>
<rect x="214" y="49" width="10" height="9.5"/>
<rect x="240" y="49" width="10" height="9.5"/>
</g>
<path d="M215.5 51.5 h7 M215.5 53.5 h7 M215.5 55.5 h7 M241.5 51.5 h7 M241.5 53.5 h7 M241.5 55.5 h7" stroke="#f2f2f2" stroke-width="1"/>
<path d="M235.5 45.5 h6 v9 h-6 z" fill="#222"/><rect x="235.5" y="44" width="6" height="2" fill="#222" rx="1"/>
<rect x="259" y="41" width="1" height="20" fill="#d9d9d9"/>
<!-- undo -->
<path d="M276 45.8 a6 6 0 1 1 -6.2 6.5" fill="none" stroke="#222" stroke-width="1.4" stroke-dasharray="18 1.6 2 1.6 2 1.6 2"/>
<path d="M277 43.3 l-4 2.6 l4 2.6 z" fill="#222"/>
<path d="M290.5 49 h7 l-3.5 4 z" fill="#7a7a7a"/>
<!-- redo -->
<path d="M314 45.8 a6 6 0 1 0 6.2 6.5" fill="none" stroke="#c8c8c8" stroke-width="1.4" stroke-dasharray="18 1.6 2 1.6 2 1.6 2"/>
<path d="M313 43.3 l4 2.6 l-4 2.6 z" fill="#c8c8c8"/>
<path d="M331 49 h6.5 l-3.25 3.8 z" fill="#cfcfcf"/>
<rect x="347" y="41" width="1" height="20" fill="#d9d9d9"/>
<!-- import/export -->
<g fill="none" stroke="#222" stroke-width="1.2">
<path d="M359.5 44.8 h-2 v13 h13.5 v-13 h-2"/>
<path d="M385.5 44.8 h-2 v13 h13.5 v-13 h-2"/>
</g>
<path d="M364.2 46 v8 M361.3 51.5 l2.9 3.2 l2.9 -3.2" fill="none" stroke="#222" stroke-width="1.8"/>
<path d="M390.2 56 v-8 M387.3 50.5 l2.9 -3.2 l2.9 3.2" fill="none" stroke="#222" stroke-width="1.8"/>
<text x="408.5" y="50.5" font-family="Liberation Sans" font-size="7.5" font-weight="bold" fill="#444">PDF</text>
<rect x="409.5" y="52.5" width="5" height="5" fill="none" stroke="#444" stroke-width="1"/><path d="M412 53.5 v4 M410.5 55 l1.5 -1.5 l1.5 1.5" stroke="#444" stroke-width="0.8" fill="none"/>
<rect x="433" y="41" width="1" height="20" fill="#d9d9d9"/>
<!-- zoom combo -->
<rect x="439.5" y="41.5" width="77" height="20" fill="#fff" stroke="#bdbdbd"/>
<rect x="499.5" y="42" width="16.5" height="19" fill="#e6e6e6"/>
<path d="M504.5 50 h7 l-3.5 3.8 z" fill="#555"/>
<text x="443" y="55.5" font-family="Liberation Sans" font-size="11" fill="#222">55%</text>
<!-- full page -->
<rect x="526" y="46" width="11.5" height="10" fill="#2a2a2a"/>
<path d="M524.5 47 v-2.5 h2.5 M536.5 44.5 h2.5 v2.5 M539 55 v2.5 h-2.5 M527 57.5 h-2.5 v-2.5" fill="none" stroke="#2a2a2a" stroke-width="1"/>
<rect x="548" y="41" width="1" height="20" fill="#d9d9d9"/>
<!-- ruler toggle -->
<rect x="555" y="41" width="20.5" height="20.5" fill="#fafafa" stroke="#c4c4c4"/>
<path d="M558.5 45 v13 h13 v-3 h-10 v-10 z" fill="none" stroke="#333" stroke-width="1.1"/>
<path d="M559 47.5 h2 M559 50 h2 M559 52.5 h2 M564 55.5 v2 M566.5 55.5 v2 M569 55.5 v2" stroke="#333" stroke-width="0.8"/>
<ellipse cx="569" cy="46.5" rx="3.5" ry="2" fill="none" stroke="#333" stroke-width="1"/><circle cx="569" cy="46.5" r="1" fill="#333"/>
<!-- grid -->
<g fill="none" stroke="#333" stroke-width="1.1">
<path d="M585 45.5 h12 v12 h-12 z M585 49.5 h12 M585 53.5 h12 M589 45.5 v12 M593 45.5 v12"/>
</g>
<ellipse cx="593.5" cy="46" rx="3.2" ry="1.8" fill="#f2f2f2" stroke="#333" stroke-width="1"/>
<!-- guidelines toggle -->
<rect x="607.5" y="41" width="20.5" height="20.5" fill="#fafafa" stroke="#c4c4c4"/>
<path d="M614.5 45 v14 M609.5 52.5 h15" fill="none" stroke="#333" stroke-width="1" stroke-dasharray="1.5 1"/>
<ellipse cx="621.5" cy="46.5" rx="3.5" ry="2" fill="none" stroke="#333" stroke-width="1"/><circle cx="621.5" cy="46.5" r="1" fill="#333"/>
<rect x="634" y="41" width="1" height="20" fill="#d9d9d9"/>
<!-- snap -->
<path d="M644.5 45.5 v13 h12.5 v-9" fill="none" stroke="#333" stroke-width="1.3"/>
<path d="M646.5 53 l4.5 -3.5 v2 h4 v3 h-4 v2 z" fill="#333"/>
<path d="M652.5 44.5 l4 4 M656.5 44.5 l-4 4" stroke="#e02020" stroke-width="1.3"/>
<path d="M716.5 50 h7 l-3.5 3.8 z" fill="#7a7a7a"/>
<rect x="733" y="41" width="1" height="20" fill="#d9d9d9"/>
<!-- gear -->
<g transform="translate(750 51)"><circle r="5.2" fill="none" stroke="#222" stroke-width="3" stroke-dasharray="2.2 1.1"/><circle r="4.8" fill="none" stroke="#222" stroke-width="2"/></g>
<path d="M756 58 l2 -2 v2 z" fill="#555"/>
<rect x="767" y="41" width="1" height="20" fill="#d9d9d9"/>
<!-- launch -->
<rect x="777.5" y="45.5" width="13" height="11.5" fill="none" stroke="#333" stroke-width="1.2"/>
<path d="M777.5 47.5 h13" stroke="#333" stroke-width="1.2"/>
<path d="M780 50.5 h6 M780 52.5 h4 M780 54.5 h5" stroke="#333" stroke-width="0.9"/>
<path d="M834 50 h7 l-3.5 3.8 z" fill="#7a7a7a"/>
</svg>
<div class="t" style="left:671px;top:45px;font-size:12px;color:#222">贴齐<span style="font-size:11px;letter-spacing:-0.6px">(<u>I</u>)</span></div>
<div class="t" style="left:798px;top:45px;font-size:12px;color:#222">启动</div>
<svg style="left:0;top:0" width="1725" height="104">
<!-- position grid -->
<g fill="none" stroke="#222" stroke-width="1.1">
<rect x="3" y="74.5" width="4.5" height="4.5"/><rect x="10.7" y="74.5" width="4.5" height="4.5"/><rect x="18.5" y="74.5" width="4.5" height="4.5"/>
<rect x="3" y="82.5" width="4.5" height="4.5"/><rect x="18.5" y="82.5" width="4.5" height="4.5"/>
<rect x="3" y="90.5" width="4.5" height="4.5"/><rect x="10.7" y="90.5" width="4.5" height="4.5"/><rect x="18.5" y="90.5" width="4.5" height="4.5"/>
</g>
<rect x="10.2" y="82" width="5.5" height="5.5" fill="#111"/>
<!-- fields -->
<g fill="#fff" stroke="#b9b9b9" stroke-width="1">
<rect x="52.5" y="70.5" width="78.5" height="29"/>
<rect x="159.5" y="70.5" width="78" height="29"/>
<rect x="242.5" y="70.5" width="38" height="29"/>
<rect x="346.5" y="74.5" width="44" height="20.5"/>
<rect x="594.5" y="70.5" width="61" height="29"/>
<rect x="720.5" y="74.5" width="72" height="20.5"/>
<rect x="797.5" y="74.5" width="89" height="20.5"/>
</g>
<path d="M53 85.5 h78 M160 85.5 h77.5 M243 85.5 h37.5 M595 85.5 h60.5" stroke="#c9c9c9"/>
<rect x="633.5" y="71" width="21.5" height="28" fill="#ececec"/>
<path d="M633.5 71 v28" stroke="#c9c9c9"/>
<path d="M636.5 77 h5 l-2.5 2.5z M636.5 92 h5 l-2.5 2.5z M648 80 h5 l-2.5 -2.5z M648 94.5 h5 l-2.5 -2.5z" fill="#666"/>
<rect x="775.5" y="75" width="16.5" height="19.5" fill="#e6e6e6"/>
<path d="M780.5 83 h7 l-3.5 3.8 z" fill="#555"/>
<rect x="870.5" y="75" width="16" height="19.5" fill="#e6e6e6"/>
<path d="M875 83 h7 l-3.5 3.8 z" fill="#555"/>
<path d="M798.5 84.5 h71.5" stroke="#666" stroke-width="1.5"/>
<!-- separators -->
<g fill="#d9d9d9">
<rect x="138" y="68" width="1" height="32"/><rect x="320" y="68" width="1" height="32"/><rect x="416" y="68" width="1" height="32"/>
<rect x="481.5" y="68" width="1" height="32"/><rect x="572.5" y="68" width="1" height="32"/><rect x="661.5" y="68" width="1" height="32"/>
<rect x="694" y="68" width="1" height="32"/><rect x="893.5" y="68" width="1" height="32"/><rect x="926.5" y="68" width="1" height="32"/>
<rect x="991.5" y="68" width="1" height="32"/><rect x="1024.5" y="68" width="1" height="32"/>
</g>
<!-- width/height icons -->
<path d="M146 77.5 h11 M146 75.5 v4 M157 75.5 v4" stroke="#222" stroke-width="1.2" fill="none"/>
<path d="M148 76 l-1.5 1.5 l1.5 1.5 M155 76 l1.5 1.5 l-1.5 1.5" stroke="#222" stroke-width="1" fill="none"/>
<path d="M151 87.5 v10 M149 87.5 h4 M149 97.5 h4 M149.5 90 l1.5 -1.5 l1.5 1.5 M149.5 95 l1.5 1.5 l1.5 -1.5" stroke="#222" stroke-width="1.2" fill="none"/>
<!-- lock -->
<rect x="302" y="85" width="9" height="5.5" fill="#111"/>
<path d="M303.5 85 v-4 a2.2 2.2 0 0 1 4.4 0" fill="none" stroke="#111" stroke-width="1.2"/>
<rect x="306" y="87" width="1" height="2" fill="#fff"/>
<!-- rotate -->
<path d="M331.5 82 a6.5 6.5 0 1 1 1.5 6.5" fill="none" stroke="#333" stroke-width="1.2"/>
<path d="M329 84 l2.5 -3.5 l2.5 3.5 z" fill="#333"/>
<circle cx="404.2" cy="81.1" r="3.6" fill="none" stroke="#333" stroke-width="1.2"/>
<!-- mirror -->
<path d="M429.5 78.5 h4 v9 h3 v3.5 h-7 z" fill="none" stroke="#333" stroke-width="1.2"/>
<path d="M438.5 78 h4.5 v13.5 h-7.5 v-3.5 h3 z" fill="#1e88c9" stroke="#333" stroke-width="0.8"/>
<path d="M436 75.5 v18" stroke="#555" stroke-width="1" stroke-dasharray="1.5 1.2"/>
<path d="M458.5 77.5 h9 v4 h-6 v3 h-3 z" fill="none" stroke="#333" stroke-width="1.2"/>
<path d="M458 86.5 h3.5 v3 h6 v3.5 h-9.5 z" fill="#1e88c9" stroke="#333" stroke-width="0.8"/>
<path d="M455 85 h15" stroke="#555" stroke-width="1" stroke-dasharray="1.5 1.2"/>
<!-- ellipse modes -->
<rect x="490.5" y="74.5" width="21" height="20.5" fill="#fafafa" stroke="#c4c4c4"/>
<circle cx="501" cy="84.7" r="7" fill="none" stroke="#333" stroke-width="1.2"/>
<path d="M527.5 78 a6.5 6.5 0 1 0 6.5 6.5 h-6.5 z" fill="none" stroke="#333" stroke-width="1.2"/>
<path d="M553.5 77.3 A7 7 0 1 0 560.5 85" fill="none" stroke="#444" stroke-width="1.2"/>
<!-- angle icons -->
<path d="M590 74.2 A5.3 5.3 0 1 0 591.5 80.5 L586.5 78.5 L590 74.5" fill="none" stroke="#555" stroke-width="1.1"/>
<path d="M590 97 A5.3 5.3 0 1 1 591.5 90.5 L586.5 92.5 L590 96.5" fill="none" stroke="#555" stroke-width="1.1"/>
<!-- faded pie -->
<path d="M677.5 78 a6.5 6.5 0 1 0 6.5 6.5 h-6.5 z M680 76 a6.5 6.5 0 0 1 5.5 5.5" fill="none" stroke="#c9c9c9" stroke-width="1.2"/>
<!-- pen -->
<path d="M709.7 76.5 l-3 6 l2 4 h2 l2 -4 z M708.7 87 v4 h2 v-4" fill="none" stroke="#333" stroke-width="1.1"/>
<path d="M709.7 78 v5" stroke="#333" stroke-width="0.8"/>
<!-- wrap -->
<path d="M903 77.5 h13 M903 80.5 h10 M903 83.5 h4 M903 86.5 h4 M903 89.5 h13 M903 92.5 h13" stroke="#222" stroke-width="1.1"/>
<circle cx="913.5" cy="85" r="3" fill="none" stroke="#3a9ad9" stroke-width="1.4"/>
<path d="M915.5 94 l3 -3 v3 z" fill="#444"/>
<!-- layers faded -->
<path d="M940 80.5 l5.5 -3 l5.5 3 l-5.5 3 z" fill="#cfcfcf"/>
<path d="M940 84 l5.5 3 l5.5 -3 M940 87.5 l5.5 3 l5.5 -3" fill="none" stroke="#cfcfcf" stroke-width="1.1"/>
<path d="M966 80.5 l5.5 -3 l5.5 3 l-5.5 3 z" fill="none" stroke="#cfcfcf" stroke-width="1.1"/>
<path d="M966 84 l5.5 3 l5.5 -3 M966 87.5 l5.5 3 l5.5 -3 l-5.5 -3 z" fill="#cfcfcf" stroke="#cfcfcf" stroke-width="1.1"/>
<!-- convert -->
<path d="M1011 79.5 a6 6 0 1 0 2.5 5" fill="none" stroke="#222" stroke-width="1.4"/>
<circle cx="1003" cy="85" r="1.3" fill="#222"/><circle cx="1008" cy="90.5" r="1.3" fill="#222"/><circle cx="1008" cy="79.3" r="1.3" fill="#222"/>
<path d="M1010 77 h4 M1010 80.5 h4" stroke="#222" stroke-width="1"/>
<!-- plus -->
<path d="M1045.5 79.5 v12 M1039.5 85.5 h12" stroke="#a9a9a9" stroke-width="1.5"/>
</svg>
<div class="t" style="left:33px;top:73px;font-size:11px;color:#222">X:</div>
<div class="t" style="left:33px;top:88px;font-size:11px;color:#222">Y:</div>
<div class="t" style="left:55px;top:73px;font-size:10px;color:#111">349.434 mm</div>
<div class="t" style="left:55px;top:88px;font-size:10px;color:#111">171.249 mm</div>
<div class="t" style="left:162px;top:73px;font-size:10px;color:#111">164.086 mm</div>
<div class="t" style="left:162px;top:88px;font-size:10px;color:#111">161.181 mm</div>
<div class="t" style="left:245px;top:73px;font-size:10px;color:#111">100.0</div>
<div class="t" style="left:245px;top:88px;font-size:10px;color:#111">100.0</div>
<div class="t" style="left:283px;top:73px;font-size:11px;color:#222">%</div>
<div class="t" style="left:283px;top:88px;font-size:11px;color:#222">%</div>
<div class="t" style="left:349px;top:79px;font-size:10.5px;color:#111">0.0</div>
<div class="t" style="left:597px;top:73px;font-size:10px;color:#111">90.0 °</div>
<div class="t" style="left:597px;top:88px;font-size:10px;color:#111">90.0 °</div>
<div class="t" style="left:723px;top:79px;font-size:10px;color:#111">0.567 pt</div>
<svg style="left:0;top:0" width="1725" height="132">
<!-- magic mirror -->
<rect x="33" y="111" width="14.5" height="14.5" fill="#f26b1a"/>
<path d="M40.2 113.5 a4.3 4.3 0 0 1 4.3 4.3 c0 2.5 -2.5 3.8 -3.3 5.2 h-2 c-0.8 -1.4 -3.3 -2.7 -3.3 -5.2 a4.3 4.3 0 0 1 4.3 -4.3z" fill="#fff"/>
<rect x="39" y="123.3" width="2.4" height="1.5" fill="#fff"/>
<rect x="99" y="108" width="1" height="21" fill="#d9d9d9"/>
<!-- planes -->
<path d="M111.5 119 L121.5 111.5 L118.5 123.5 L116 120.5 L114 123 L114.5 119.8 Z" fill="#1e9a42"/>
<path d="M114.5 119.8 L121.5 111.5" stroke="#6ed08a" stroke-width="0.8"/>
<path d="M168 116 h7 l-3.5 3.8 z" fill="#7a7a7a"/>
<path d="M189.5 119 L199.5 111.5 L196.5 123.5 L194 120.5 L192 123 L192.5 119.8 Z" fill="#9b2bd1"/>
<path d="M192.5 119.8 L199.5 111.5" stroke="#d79af0" stroke-width="0.8"/>
<path d="M247 116 h7 l-3.5 3.8 z" fill="#7a7a7a"/>
<path d="M267.5 119 L277.5 111.5 L274.5 123.5 L272 120.5 L270 123 L270.5 119.8 Z" fill="#1e35d8"/>
<path d="M270.5 119.8 L277.5 111.5" stroke="#9aa8f5" stroke-width="0.8"/>
<path d="M325 116 h7 l-3.5 3.8 z" fill="#7a7a7a"/>
<path d="M346.5 119 L356.5 111.5 L353.5 123.5 L351 120.5 L349 123 L349.5 119.8 Z" fill="#e01b1b"/>
<path d="M349.5 119.8 L356.5 111.5" stroke="#f5a0a0" stroke-width="0.8"/>
<path d="M403.5 116 h7 l-3.5 3.8 z" fill="#7a7a7a"/>
<rect x="421" y="108" width="1" height="21" fill="#d9d9d9"/>
<!-- convert curve -->
<path d="M440 112.5 a6 6 0 1 0 4.5 5" fill="none" stroke="#333" stroke-width="1.2"/>
<circle cx="431.5" cy="118.5" r="1.3" fill="#333"/><circle cx="437" cy="124" r="1.3" fill="#333"/><circle cx="437" cy="112.5" r="1.3" fill="#333"/>
<path d="M441 111 h3 M441 114 h3" stroke="#333" stroke-width="1"/>
<!-- smart group -->
<path d="M495 111.5 h2 M495 111.5 v2 M507 111.5 h-2 M507 111.5 v2 M495 124.5 h2 M495 124.5 v-2 M507 124.5 h-2 M507 124.5 v-2" stroke="#333" stroke-width="1.3"/>
<circle cx="501" cy="118" r="3" fill="none" stroke="#333" stroke-width="1.3"/>
<path d="M501 113 v2 M501 121 v2 M496 118 h2 M504 118 h2" stroke="#333" stroke-width="1.1"/>
<!-- ps -->
<rect x="582" y="111" width="13.5" height="13.5" fill="#0b2240"/>
<text x="583.3" y="121.8" font-family="Liberation Sans" font-size="9" fill="#31a8ff">Ps</text>
<!-- export image -->
<rect x="657.5" y="112" width="13" height="10.5" fill="none" stroke="#333" stroke-width="1.2"/>
<path d="M659 121 l3.5 -4 l3 3 l2 -2 l2.5 3" fill="none" stroke="#333" stroke-width="1"/>
<circle cx="667" cy="115" r="1" fill="#333"/>
<!-- imposition marks -->
<path d="M751 111 v14 M746 115.5 h11 M748 113 l3 -2 l3 2" fill="none" stroke="#222" stroke-width="1.3"/>
<path d="M756 118 l3 3" stroke="#222" stroke-width="1.3"/>
<rect x="745.5" y="118" width="2" height="6" fill="#f0a"/><rect x="745.5" y="120" width="2" height="2" fill="#0bf"/>
<!-- gear -->
<g transform="translate(839 118.5)"><circle r="5" fill="none" stroke="#111" stroke-width="3.2" stroke-dasharray="2.3 1.6"/><circle r="4.3" fill="none" stroke="#111" stroke-width="2.2"/></g>
<!-- A q -->
<text x="919" y="118" font-family="Liberation Sans" font-size="9" fill="#333">A</text>
<circle cx="928.5" cy="121.5" r="2.5" fill="none" stroke="#333" stroke-width="1.1"/><path d="M930.5 123.5 l2.5 2.5" stroke="#333" stroke-width="1.2"/>
<rect x="1005" y="108" width="1" height="21" fill="#d9d9d9"/>
<!-- calendar -->
<rect x="1016" y="113" width="11" height="11.5" fill="#fff" stroke="#7a5aa8" stroke-width="1.1"/>
<rect x="1016" y="113" width="11" height="3" fill="#7a5aa8"/>
<text x="1018.2" y="123" font-family="Liberation Sans" font-size="5.5" fill="#7a5aa8">31</text>
<rect x="1099" y="108" width="1" height="21" fill="#d9d9d9"/>
<!-- green find -->
<rect x="1109" y="111" width="15" height="14.5" rx="1.5" fill="#1fa64a"/>
<path d="M1112 118 c2 -3 7 -3 9 0 c-2 3 -7 3 -9 0z" fill="none" stroke="#fff" stroke-width="0.9"/>
<path d="M1111 114 v-1.5 h1.5 M1122 114 v-1.5 h-1.5 M1111 122 v1.5 h1.5 M1122 122 v1.5 h-1.5" stroke="#fff" stroke-width="0.8" fill="none"/>
<!-- waves -->
<path d="M1199 125 q-4 -6 3 -13 M1203 125 q-4 -6 3 -13 M1207 125 q-4 -6 3 -13 M1197 124.5 h13" fill="none" stroke="#7b5cf0" stroke-width="1.3"/>
<!-- knot -->
<g fill="none" stroke="#2aa4e8" stroke-width="2">
<ellipse cx="1292" cy="118" rx="6.5" ry="3"/><ellipse cx="1292" cy="118" rx="3" ry="6.5"/>
<circle cx="1287" cy="113" r="2.5"/><circle cx="1297" cy="113" r="2.5"/><circle cx="1287" cy="123" r="2.5"/><circle cx="1297" cy="123" r="2.5"/>
</g>
<!-- locate -->
<circle cx="1355" cy="118" r="3" fill="none" stroke="#222" stroke-width="1.6"/>
<path d="M1355 111 v3 M1355 122 v3 M1348 118 h3 M1359 118 h3" stroke="#222" stroke-width="1.5"/>
<!-- undo fast -->
<path d="M1428.5 115 a4.5 4.5 0 1 1 -0.5 6.5" fill="none" stroke="#1e9a42" stroke-width="1.8"/>
<path d="M1425.5 112 v5 h5 z" fill="#1e9a42"/>
<rect x="1509.5" y="108" width="1" height="21" fill="#d9d9d9"/>
<!-- redo fast -->
<path d="M1529 116 a5 5 0 1 0 1 5" fill="none" stroke="#2aa4e8" stroke-width="2.2"/>
<path d="M1526 112 l6 3 l-5 3 z" fill="#2aa4e8"/>
<!-- right end -->
<rect x="1710" y="104" width="1" height="28" fill="#d4d4d4"/><g fill="#bbb"><rect x="1713" y="106" width="1" height="1"/><rect x="1716.5" y="106" width="1" height="1"/><rect x="1720" y="106" width="1" height="1"/><rect x="1723.5" y="106" width="1" height="1"/><rect x="1714.8" y="108" width="1" height="1"/><rect x="1718.3" y="108" width="1" height="1"/><rect x="1721.8" y="108" width="1" height="1"/><rect x="1713" y="110" width="1" height="1"/><rect x="1716.5" y="110" width="1" height="1"/><rect x="1720" y="110" width="1" height="1"/><rect x="1723.5" y="110" width="1" height="1"/></g>
<path d="M1716.5 115.5 v8 l4.5 -4 z" fill="#555"/>
</svg>
<div class="t" style="left:55px;top:111.5px">魔镜</div>
<div class="t" style="left:130px;top:111.5px">常用</div>
<div class="t" style="left:209px;top:111.5px">特殊</div>
<div class="t" style="left:287px;top:111.5px">超级</div>
<div class="t" style="left:365px;top:111.5px">通用</div>
<div class="t" style="left:452px;top:111.5px">转曲</div>
<div class="t" style="left:516px;top:111.5px">智能群组</div>
<div class="t" style="left:603px;top:111.5px">一键PS</div>
<div class="t" style="left:679px;top:111.5px">导出图片</div>
<div class="t" style="left:766px;top:111.5px">拼版角线</div>
<div class="t" style="left:854px;top:111.5px">插件设置</div>
<div class="t" style="left:941px;top:111.5px">截图识字</div>
<div class="t" style="left:1036px;top:111.5px">农历生成</div>
<div class="t" style="left:1131px;top:111.5px">截图找字</div>
<div class="t" style="left:1218px;top:111.5px">超级巡边</div>
<div class="t" style="left:1305px;top:111.5px">巡边</div>
<div class="t" style="left:1370px;top:111.5px">定位点</div>
<div class="t" style="left:1446px;top:111.5px">极速撤销</div>
<div class="t" style="left:1540px;top:111.5px">极速重复</div>
<svg style="left:0;top:0" width="26" height="700">
<g fill="#666">
<path d="M18 128.5 l4 -4 v4 z"/><path d="M18 154 l4 -4 v4 z"/><path d="M18 185.5 l4 -4 v4 z"/><path d="M18 212 l4 -4 v4 z"/>
<path d="M18 245 l4 -4 v4 z"/><path d="M18 272 l4 -4 v4 z"/><path d="M18 298 l4 -4 v4 z"/><path d="M18 327 l4 -4 v4 z"/>
<path d="M18 350 l4 -4 v4 z"/><path d="M18 384 l4 -4 v4 z"/><path d="M18 410 l4 -4 v4 z"/><path d="M18 443 l4 -4 v4 z"/>
<path d="M18 470 l4 -4 v4 z"/><path d="M18 502 l4 -4 v4 z"/><path d="M18 562 l4 -4 v4 z"/><path d="M18 589 l4 -4 v4 z"/>
</g>
<g fill="#d4d4d4"><rect x="2" y="161" width="20" height="1"/><rect x="2" y="221" width="20" height="1"/><rect x="2" y="359" width="20" height="1"/><rect x="2" y="418" width="20" height="1"/><rect x="2" y="478" width="20" height="1"/><rect x="2" y="537" width="20" height="1"/><rect x="2" y="597" width="20" height="1"/></g>
<!-- select -->
<path d="M9 112 L9 124 L11.5 121.5 L14 126.5 L16 125.5 L13.5 120.5 L17 120.5 Z" fill="#222"/>
<!-- shape -->
<path d="M8 144 q1 5 3 8" fill="none" stroke="#333" stroke-width="1"/>
<circle cx="8" cy="142.5" r="1.7" fill="#fff" stroke="#333" stroke-width="1"/>
<path d="M8 139 v-1.5" stroke="#333"/>
<path d="M12 147 l6 1 l-2.5 4 z" fill="#222"/>
<!-- crop -->
<path d="M7.5 171 v8 h9 M4 175 h8.5 v8 M12.5 179 v6 M16.5 179 h2.5" fill="none" stroke="#222" stroke-width="2"/>
<!-- zoom -->
<circle cx="10.1" cy="203.5" r="6" fill="none" stroke="#222" stroke-width="1.3"/>
<path d="M14.3 207.7 l4 4" stroke="#222" stroke-width="2"/>
<!-- freehand -->
<path d="M7 231.5 v5 M4.5 234 h5" stroke="#333" stroke-width="1"/>
<path d="M8 239 v5 h2 q1 -3 2 0 q1 -3 2 0 q1 -3 2 0 l2 -1" fill="none" stroke="#333" stroke-width="1.2"/>
<!-- bezier S -->
<path d="M5 261 q2 -5 5 -2 q2 3 0 5 q-2 3 2 5 q3 1 5 -2" fill="none" stroke="#222" stroke-width="1.6"/>
<!-- rect -->
<rect x="4.5" y="283.5" width="14" height="13.5" fill="none" stroke="#222" stroke-width="1.2"/>
<!-- ellipse selected -->
<rect x="1.5" y="306" width="20" height="20.5" fill="#fff" stroke="#c8c8c8"/>
<circle cx="11.5" cy="316.3" r="7.2" fill="none" stroke="#222" stroke-width="1.2"/>
<!-- hexagon -->
<path d="M7.5 335.5 h7 l3.8 7 l-3.8 7 h-7 l-3.8 -7 z" fill="none" stroke="#222" stroke-width="1.1"/>
<!-- table -->
<rect x="4.5" y="369" width="14" height="13.5" fill="none" stroke="#222" stroke-width="1.3"/>
<path d="M4.5 373.5 h14 M4.5 378 h14 M9 369 v13.5" stroke="#222" stroke-width="1.1"/>
</svg>
<div class="t" style="left:4px;top:395px;font-size:15px;font-weight:bold;color:#111">字</div>
<svg style="left:0;top:0" width="26" height="700">
<!-- dimension -->
<path d="M6.3 441 L16.8 429.7 M4.5 439 l3.5 4 M15 428 l3.5 4" fill="none" stroke="#333" stroke-width="1.1"/>
<!-- connector -->
<path d="M6.3 456 L16.5 466.7" stroke="#333" stroke-width="1.1"/>
<rect x="4" y="453.5" width="4.5" height="4.5" fill="#e8650f" stroke="#333" stroke-width="0.6"/>
<rect x="14.5" y="464.5" width="4.5" height="4.5" fill="#e8650f" stroke="#333" stroke-width="0.6"/>
<!-- shadow -->
<path d="M7.5 500.5 h11 v-11" fill="none" stroke="#333" stroke-width="1.5"/>
<rect x="4.5" y="488.5" width="11" height="10" fill="#fff" stroke="#333" stroke-width="1.1"/>
<!-- checker -->
<rect x="4" y="514" width="15" height="14.5" fill="#222"/>
<g fill="#fff">
<rect x="6" y="516" width="2.5" height="2.5"/><rect x="11" y="516" width="2.5" height="2.5"/><rect x="16" y="516" width="1.5" height="2.5"/>
<rect x="8.5" y="518.5" width="2.5" height="2.5"/><rect x="13.5" y="518.5" width="2.5" height="2.5"/>
<rect x="6" y="521" width="2.5" height="2.5"/><rect x="11" y="521" width="2.5" height="2.5"/><rect x="16" y="521" width="1.5" height="2.5"/>
<rect x="8.5" y="523.5" width="2.5" height="2.5"/><rect x="13.5" y="523.5" width="2.5" height="2.5"/>
</g>
<!-- eyedropper -->
<path d="M5.5 560 L13 552.5" stroke="#c85a1a" stroke-width="2.2" stroke-linecap="round"/>
<path d="M12 550 l3 -3 a1.8 1.8 0 0 1 3 3 l-3 3 z" fill="#333"/>
<path d="M11 549 l5 5" stroke="#333" stroke-width="1.4"/>
<!-- fill -->
<path d="M10.5 574.5 l7 7 l-6 6 l-7 -7 z" fill="#fff" stroke="#222" stroke-width="1.6"/>
<path d="M7 581 h7.5 l-3.5 2.5z" fill="#e01010"/>
<path d="M16.5 583.5 l2.5 4.5 h-4 z" fill="#e01010"/>
<!-- plus -->
<path d="M11.3 613 v10 M6.3 618 h10" stroke="#a8a8a8" stroke-width="1.4"/>
</svg>
<svg style="left:0;top:0" width="300" height="170">
<path d="M34 135 l-7 6.5 h2 v7.5 h4 v-4 h2 v4 h4 v-7.5 h2 z" fill="#333"/>
<path d="M219 141.5 h10.5 M224.2 136.5 v10.5" stroke="#b9b9b9" stroke-width="1.3"/>
<!-- ruler corner -->
<path d="M30 157 v7 M30 157 l8 7" stroke="#888" stroke-width="1" stroke-dasharray="1 1" fill="none"/>
<path d="M33 157 h5" stroke="#888" stroke-width="0.8" stroke-dasharray="1 1"/>
</svg>
<div class="t" style="left:56px;top:135.5px;color:#222">欢迎屏幕</div>
<div class="t" style="left:137px;top:135.5px;color:#222">未命名 -1*</div>
<div class="a" style="left:1426px;top:132px;width:1px;height:762px;background:#d4d4d4"></div><div class="a" style="left:1427px;top:132px;width:265px;height:21px;background:#e9e9e9;border-bottom:1px solid #c9c9c9"></div><div class="t" style="left:1434px;top:137px;color:#222">对象 (0)</div><svg style="left:0;top:0" width="1725" height="932"><path d="M1679 139.5 v6.5 l3.5 -3.25z" fill="#bdbdbd"/></svg><div class="a" style="left:1427px;top:154px;width:265px;height:58px;background:#f2f2f2"></div><div class="a" style="left:1430px;top:160px;width:260px;height:21px;background:#fff;border:1px solid #c8c8c8"></div><div class="t" style="left:1433px;top:164.5px;color:#7a7a7a">搜索</div><div class="a" style="left:1430px;top:187px;width:21px;height:21px;background:#fafafa;border:1px solid #c8c8c8"></div><div class="a" style="left:1427px;top:212px;width:265px;height:659px;background:#fff"></div><div class="a" style="left:1427px;top:212px;width:265px;height:22px;background:#f2f2f2"></div><div class="t" style="left:1459px;top:216.5px;font-weight:bold;color:#1a1a1a">页面 1</div><div class="t" style="left:1483px;top:240.0px;color:#1a1a1a">辅助线</div><div class="t" style="left:1483px;top:264.5px;font-weight:bold;color:#1a1a1a">图层 1</div><div class="t" style="left:1491px;top:288.0px;color:#1a1a1a">矩形</div><div class="a" style="left:1427px;top:306px;width:265px;height:22px;background:#f2f2f2"></div><div class="t" style="left:1459px;top:310.5px;font-weight:bold;color:#1a1a1a">页面 2</div><div class="t" style="left:1483px;top:333.5px;color:#1a1a1a">辅助线</div><div class="t" style="left:1483px;top:357.5px;color:#1a1a1a">图层 1</div><div class="a" style="left:1427px;top:376px;width:265px;height:23px;background:#f2f2f2"></div><div class="t" style="left:1459px;top:381.0px;font-weight:bold;color:#1a1a1a">主页面</div><div class="t" style="left:1483px;top:404.5px;color:#1a1a1a">辅助线 (所有页)</div><div class="t" style="left:1483px;top:428.0px;color:#1a1a1a">桌面</div><div class="a" style="left:1429px;top:446px;width:261px;height:24px;background:#deedfc"></div><div class="t" style="left:1491px;top:451.5px;color:#1a1a1a">椭圆形</div><div class="t" style="left:1483px;top:475.0px;color:#1a1a1a">文档网格</div><svg style="left:0;top:0" width="1725" height="932"><rect x="1429" y="233.5" width="261" height="1" fill="#e6e6e6"/><path d="M1438 220.3 h7 l-3.5 5 z" fill="#222"/><rect x="1429" y="258.5" width="261" height="1" fill="#e6e6e6"/><path d="M1455.6 240.5 v11.5" stroke="#666" stroke-width="1" stroke-dasharray="1.2 0.8"/><path d="M1452.5 244.0 h10" stroke="#666" stroke-width="1" stroke-dasharray="2 0.7"/><circle cx="1455.6" cy="244.0" r="1.3" fill="#555"/><path d="M1664.5 251.5 v-4.5 h10.5 v4.5 z M1667.3 247.0 v-5 h3.2 a1.8 1.8 0 0 1 1.8 1.8 v3.2" fill="none" stroke="#444" stroke-width="1"/><path d="M1664.3 241.0 L1674.5 251.5" stroke="#666" stroke-width="0.7"/><rect x="1682" y="238.5" width="4" height="16" rx="2" fill="#0000ff"/><path d="M1438 268.3 h7 l-3.5 5 z" fill="#222"/><path d="M1452.5 269.5 l5.5 -4 l5.5 4 l-5.5 4 z" fill="#fff" stroke="#222" stroke-width="1.1"/><path d="M1452.5 272.7 l5.5 -3.2 l5.5 3.2 l-5.5 4 z" fill="#222"/><rect x="1682" y="263.0" width="4" height="16" rx="2" fill="#231815"/><rect x="1460.5" y="286.5" width="11.5" height="15" fill="#fff" stroke="#dcdcdc"/><rect x="1429" y="327.5" width="261" height="1" fill="#e6e6e6"/><path d="M1438 314.3 h7 l-3.5 5 z" fill="#222"/><rect x="1429" y="351.5" width="261" height="1" fill="#e6e6e6"/><path d="M1455.6 334.0 v11.5" stroke="#666" stroke-width="1" stroke-dasharray="1.2 0.8"/><path d="M1452.5 337.5 h10" stroke="#666" stroke-width="1" stroke-dasharray="2 0.7"/><circle cx="1455.6" cy="337.5" r="1.3" fill="#555"/><path d="M1664.5 345.0 v-4.5 h10.5 v4.5 z M1667.3 340.5 v-5 h3.2 a1.8 1.8 0 0 1 1.8 1.8 v3.2" fill="none" stroke="#444" stroke-width="1"/><path d="M1664.3 334.5 L1674.5 345.0" stroke="#666" stroke-width="0.7"/><rect x="1682" y="332.0" width="4" height="16" rx="2" fill="#0000ff"/><rect x="1429" y="375.5" width="261" height="1" fill="#e6e6e6"/><path d="M1452.5 362.5 l5.5 -4 l5.5 4 l-5.5 4 z" fill="#fff" stroke="#222" stroke-width="1.1"/><path d="M1452.5 365.7 l5.5 -3.2 l5.5 3.2 l-5.5 4 z" fill="#222"/><rect x="1682" y="356.0" width="4" height="16" rx="2" fill="#231815"/><rect x="1429" y="398.5" width="261" height="1" fill="#e6e6e6"/><path d="M1438 384.8 h7 l-3.5 5 z" fill="#222"/><rect x="1429" y="422.5" width="261" height="1" fill="#e6e6e6"/><path d="M1455.6 405.0 v11.5" stroke="#666" stroke-width="1" stroke-dasharray="1.2 0.8"/><path d="M1452.5 408.5 h10" stroke="#666" stroke-width="1" stroke-dasharray="2 0.7"/><circle cx="1455.6" cy="408.5" r="1.3" fill="#555"/><path d="M1664.5 416.0 v-4.5 h10.5 v4.5 z M1667.3 411.5 v-5 h3.2 a1.8 1.8 0 0 1 1.8 1.8 v3.2" fill="none" stroke="#444" stroke-width="1"/><path d="M1664.3 405.5 L1674.5 416.0" stroke="#666" stroke-width="0.7"/><rect x="1682" y="403.0" width="4" height="16" rx="2" fill="#0000ff"/><rect x="1429" y="445.5" width="261" height="1" fill="#e6e6e6"/><path d="M1438 431.8 h7 l-3.5 5 z" fill="#222"/><rect x="1453" y="429.5" width="10" height="10" fill="none" stroke="#222" stroke-width="1.1"/><rect x="1455" y="431.5" width="6" height="6" fill="#222"/><path d="M1452 428.5 h2 M1462 428.5 h2 M1452 440.5 h2 M1462 440.5 h2" stroke="#222"/><path d="M1664.5 439.5 v-4.5 h10.5 v4.5 z M1667.3 435.0 v-5 h3.2 a1.8 1.8 0 0 1 1.8 1.8 v3.2" fill="none" stroke="#444" stroke-width="1"/><path d="M1664.3 429.0 L1674.5 439.5" stroke="#666" stroke-width="0.7"/><rect x="1682" y="426.5" width="4" height="16" rx="2" fill="#231815"/><rect x="1429" y="469.5" width="261" height="1" fill="#e6e6e6"/><circle cx="1466" cy="458.0" r="7.8" fill="#9d9ea0"/><path d="M1455 476.0 v11 M1460 476.0 v11 M1452 479.0 h11 M1452 484.0 h11" stroke="#333" stroke-width="1"/><ellipse cx="1640.5" cy="481.5" rx="5" ry="3" fill="none" stroke="#666" stroke-width="1"/><circle cx="1640.5" cy="481.5" r="1.5" fill="#666"/><path d="M1636 477.5 l9 8" stroke="#666" stroke-width="1"/><rect x="1651" y="480.5" width="7.5" height="6" fill="#c9c9c9"/><path d="M1652.5 480.5 v-2 a2.3 2.3 0 0 1 4.6 0 v2" fill="none" stroke="#c9c9c9" stroke-width="1.2"/><path d="M1664.5 486.5 v-4.5 h10.5 v4.5 z M1667.3 482.0 v-5 h3.2 a1.8 1.8 0 0 1 1.8 1.8 v3.2" fill="none" stroke="#c9c9c9" stroke-width="1"/><path d="M1664.3 476.0 L1674.5 486.5" stroke="#c9c9c9" stroke-width="0.7"/><rect x="1682" y="473.5" width="4" height="16" rx="2" fill="#c8c8c8"/></svg><svg style="left:0;top:0" width="1725" height="932">
<path d="M1435.5 204 v-10 l3 -3 h6.5 v6" fill="none" stroke="#222" stroke-width="1.1"/><path d="M1435.5 194 h3 v-3 z" fill="#222"/>
<path d="M1435.5 204 h5" stroke="#222" stroke-width="1.1"/>
<path d="M1440 199.5 l4.5 -3 l4.5 3 l-4.5 3 z" fill="#fff" stroke="#222" stroke-width="1"/>
<path d="M1440 202 l4.5 -2.5 l4.5 2.5 l-4.5 3 z" fill="#222"/>
<path d="M1459.5 195 l7 -4.5 l7 4.5 l-7 4.5 z" fill="#fff" stroke="#222" stroke-width="1.2"/>
<path d="M1459.5 199.5 l7 -4 l7 4 l-7 4.8 z" fill="#222"/>
<path d="M1489.5 190.5 h8.5 v14 h-11.5 v-11 z" fill="none" stroke="#333" stroke-width="1.1"/><path d="M1486.5 193.5 h3 v-3 z" fill="#333"/>
<g transform="translate(1678 197)"><circle r="5" fill="none" stroke="#222" stroke-width="3.2" stroke-dasharray="2.3 1.6"/><circle r="4.3" fill="none" stroke="#222" stroke-width="2.2"/></g>
<path d="M1685 205 l3 -3 v3z" fill="#555"/>
</svg><div class="t" style="left:1508px;top:190px;font-weight:bold;color:#111">页面 1</div><div class="t" style="left:1557px;top:190px;color:#222">图层 1</div><div class="a" style="left:1428px;top:871px;width:263px;height:23px;background:#f2f2f2"></div><svg style="left:0;top:0" width="1725" height="932">
<path d="M1434 882 l6.5 -4 l6.5 4 l-6.5 4 z" fill="none" stroke="#222" stroke-width="1.2"/>
<path d="M1434 885.5 l6.5 -3.5 l6.5 3.5 l-6.5 4 z" fill="#222"/>
<rect x="1442" y="875" width="7" height="7" fill="#1aa23c"/><path d="M1445.5 876 v5 M1443 878.5 h5" stroke="#fff" stroke-width="1.1"/>
<path d="M1460 880 l6.5 -3.5 l6.5 3.5 l-6.5 3.5 z M1460 883.5 l6.5 3.5 l6.5 -3.5 M1460 887 l6.5 3.5 l6.5 -3.5" fill="none" stroke="#333" stroke-width="1"/>
<rect x="1468" y="875" width="7" height="7" fill="#1aa23c"/><path d="M1471.5 876 v5 M1469 878.5 h5" stroke="#fff" stroke-width="1.1"/>
<path d="M1474 891 l3 -3 v3z" fill="#555"/>
<text x="1486" y="889.5" font-family="Liberation Serif" font-style="italic" font-size="11" fill="#222">fx</text>
<rect x="1494" y="875" width="7" height="7" fill="#1aa23c"/><path d="M1497.5 876 v5 M1495 878.5 h5" stroke="#fff" stroke-width="1.1"/>
<path d="M1513 878 h12 M1517 878 v-1.5 h4 v1.5" fill="none" stroke="#222" stroke-width="1.2"/>
<path d="M1514.5 879.5 h9 l-0.8 10 h-7.4 z" fill="#222"/>
<path d="M1517 881 v7 M1519 881 v7 M1521 881 v7" stroke="#f2f2f2" stroke-width="0.8"/>
<path d="M1582 883.5 h104 M1582 879 v9 M1686 879 v9 M1634 879 v9" stroke="#9a9a9a" stroke-width="1"/>
<path d="M1582 885 h104" stroke="#cfcfcf" stroke-width="1"/>
<rect x="1611.5" y="875.5" width="4.5" height="15" rx="1" fill="#eaf4fc" stroke="#5ab4e8" stroke-width="1"/>
</svg><div class="t" style="left:1467px;top:843px;font-size:19px;color:#c3c3c3;-webkit-text-stroke:0">激活 Windows</div><div class="t" style="left:1467px;top:868px;font-size:13.6px;color:#c6c6c6;-webkit-text-stroke:0">转到“设置”以激活 Windows。</div><div class="a" style="left:1691px;top:153px;width:1.5px;height:741px;background:#3db5ea"></div>
<div class="a" style="left:1711px;top:132px;width:14px;height:762px;background:#f2f2f2"></div><div class="a" style="left:1692px;top:132px;width:19.5px;height:762px;background:#e9e9e9"></div><div class="a" style="left:1692px;top:243px;width:19.5px;height:91px;background:#dadada"></div><div class="a" style="left:1692.5px;top:152px;width:18.5px;height:91px;background:#cce4f7"></div><div class="a" style="left:1711px;top:160px;width:1.3px;height:734px;background:#c4c4c4"></div><svg style="left:0;top:0" width="1725" height="932">
<path d="M1696.5 146.5 l3.5 -3.5 l3.5 3.5" fill="none" stroke="#aaa" stroke-width="1"/>
<path d="M1695 162 l6 -4 l6 4 l-6 4 z" fill="#fff" stroke="#333" stroke-width="1.1"/>
<path d="M1695 165.5 l6 -3.5 l6 3.5 l-6 4.5 z" fill="#333"/>
<path d="M1695 251 l6.5 -3 l6.5 3 v5.5 l-6.5 3 l-6.5 -3 z M1695 251 l6.5 3 l6.5 -3 M1701.5 254 v5.5" fill="none" stroke="#333" stroke-width="1"/>
<path d="M1695 253 l6 3" stroke="#333" stroke-width="0.6"/>
<path d="M1701.5 339 v10 M1696.5 344 h10" stroke="#b5b5b5" stroke-width="1.3"/>
<path d="M1716 141 l7 -7 M1720 134 h3 v3" fill="none" stroke="#aaa" stroke-width="1"/>
<path d="M1715.5 155 l3.5 -3.5 l3.5 3.5" fill="none" stroke="#bbb" stroke-width="1"/>
<path d="M1715.5 861.5 l3.5 3.5 l3.5 -3.5" fill="none" stroke="#999" stroke-width="1"/>
<path d="M1715 877 l3 3 l-3 3 M1719 877 l3 3 l-3 3" fill="none" stroke="#aaa" stroke-width="1"/>
</svg><div class="t" style="left:1708px;top:177px;color:#222;font-size:11px;transform-origin:0 0;transform:rotate(90deg)">对象 (O)</div><div class="t" style="left:1707px;top:264.5px;color:#222;font-size:11px;transform-origin:0 0;transform:rotate(90deg)">立体化<span style="letter-spacing:-0.5px">(X)</span></div><div class="a" style="left:1712.5px;top:162px;width:12.5px;height:15.5px;background:#fff;border:1px solid #9a9a9a;border-right:none"></div><svg style="left:0;top:0" width="1725" height="932"><path d="M1713.5 176.5 L1725 166" stroke="#e03030" stroke-width="0.9"/></svg><div class="a" style="left:1712.5px;top:177.50px;width:12.5px;height:15.43px;background:#231815;border-top:1px solid rgba(0,0,0,0.28)"></div><div class="a" style="left:1712.5px;top:192.93px;width:12.5px;height:15.43px;background:#3e3a39;border-top:1px solid rgba(0,0,0,0.28)"></div><div class="a" style="left:1712.5px;top:208.36px;width:12.5px;height:15.43px;background:#595757;border-top:1px solid rgba(0,0,0,0.28)"></div><div class="a" style="left:1712.5px;top:223.79px;width:12.5px;height:15.43px;background:#727171;border-top:1px solid rgba(0,0,0,0.28)"></div><div class="a" style="left:1712.5px;top:239.22px;width:12.5px;height:15.43px;background:#898989;border-top:1px solid rgba(0,0,0,0.28)"></div><div class="a" style="left:1712.5px;top:254.65px;width:12.5px;height:15.43px;background:#9fa0a0;border-top:1px solid rgba(0,0,0,0.28)"></div><div class="a" style="left:1712.5px;top:270.08px;width:12.5px;height:15.43px;background:#b5b5b6;border-top:1px solid rgba(0,0,0,0.28)"></div><div class="a" style="left:1712.5px;top:285.51px;width:12.5px;height:15.43px;background:#c9caca;border-top:1px solid rgba(0,0,0,0.28)"></div><div class="a" style="left:1712.5px;top:300.94px;width:12.5px;height:15.43px;background:#dcdddd;border-top:1px solid rgba(0,0,0,0.28)"></div><div class="a" style="left:1712.5px;top:316.37px;width:12.5px;height:15.43px;background:#efefef;border-top:1px solid rgba(0,0,0,0.28)"></div><div class="a" style="left:1712.5px;top:331.80px;width:12.5px;height:15.43px;background:#ffffff;border-top:1px solid rgba(0,0,0,0.28)"></div><div class="a" style="left:1712.5px;top:347.23px;width:12.5px;height:15.43px;background:#1d2088;border-top:1px solid rgba(0,0,0,0.28)"></div><div class="a" style="left:1712.5px;top:362.66px;width:12.5px;height:15.43px;background:#00a0e9;border-top:1px solid rgba(0,0,0,0.28)"></div><div class="a" style="left:1712.5px;top:378.09px;width:12.5px;height:15.43px;background:#009944;border-top:1px solid rgba(0,0,0,0.28)"></div><div class="a" style="left:1712.5px;top:393.52px;width:12.5px;height:15.43px;background:#fff100;border-top:1px solid rgba(0,0,0,0.28)"></div><div class="a" style="left:1712.5px;top:408.95px;width:12.5px;height:15.43px;background:#e60012;border-top:1px solid rgba(0,0,0,0.28)"></div><div class="a" style="left:1712.5px;top:424.38px;width:12.5px;height:15.43px;background:#e4007f;border-top:1px solid rgba(0,0,0,0.28)"></div><div class="a" style="left:1712.5px;top:439.81px;width:12.5px;height:15.43px;background:#a84c8c;border-top:1px solid rgba(0,0,0,0.28)"></div><div class="a" style="left:1712.5px;top:455.24px;width:12.5px;height:15.43px;background:#f08300;border-top:1px solid rgba(0,0,0,0.28)"></div><div class="a" style="left:1712.5px;top:470.67px;width:12.5px;height:15.43px;background:#f5b2b2;border-top:1px solid rgba(0,0,0,0.28)"></div><div class="a" style="left:1712.5px;top:486.10px;width:12.5px;height:15.43px;background:#8a7a70;border-top:1px solid rgba(0,0,0,0.28)"></div><div class="a" style="left:1712.5px;top:501.53px;width:12.5px;height:15.43px;background:#d0cbe5;border-top:1px solid rgba(0,0,0,0.28)"></div><div class="a" style="left:1712.5px;top:516.96px;width:12.5px;height:15.43px;background:#a69ad0;border-top:1px solid rgba(0,0,0,0.28)"></div><div class="a" style="left:1712.5px;top:532.39px;width:12.5px;height:15.43px;background:#7289c8;border-top:1px solid rgba(0,0,0,0.28)"></div><div class="a" style="left:1712.5px;top:547.82px;width:12.5px;height:15.43px;background:#7a6ab0;border-top:1px solid rgba(0,0,0,0.28)"></div><div class="a" style="left:1712.5px;top:563.25px;width:12.5px;height:15.43px;background:#9088b0;border-top:1px solid rgba(0,0,0,0.28)"></div><div class="a" style="left:1712.5px;top:578.68px;width:12.5px;height:15.43px;background:#4f6394;border-top:1px solid rgba(0,0,0,0.28)"></div><div class="a" style="left:1712.5px;top:594.11px;width:12.5px;height:15.43px;background:#5b5778;border-top:1px solid rgba(0,0,0,0.28)"></div><div class="a" style="left:1712.5px;top:609.54px;width:12.5px;height:15.43px;background:#7088a8;border-top:1px solid rgba(0,0,0,0.28)"></div><div class="a" style="left:1712.5px;top:624.97px;width:12.5px;height:15.43px;background:#0f7fd5;border-top:1px solid rgba(0,0,0,0.28)"></div><div class="a" style="left:1712.5px;top:640.40px;width:12.5px;height:15.43px;background:#99d3f5;border-top:1px solid rgba(0,0,0,0.28)"></div><div class="a" style="left:1712.5px;top:655.83px;width:12.5px;height:15.43px;background:#b8ccd8;border-top:1px solid rgba(0,0,0,0.28)"></div><div class="a" style="left:1712.5px;top:671.26px;width:12.5px;height:15.43px;background:#8fa2ad;border-top:1px solid rgba(0,0,0,0.28)"></div><div class="a" style="left:1712.5px;top:686.69px;width:12.5px;height:15.43px;background:#6e7f86;border-top:1px solid rgba(0,0,0,0.28)"></div><div class="a" style="left:1712.5px;top:702.12px;width:12.5px;height:15.43px;background:#4a555c;border-top:1px solid rgba(0,0,0,0.28)"></div><div class="a" style="left:1712.5px;top:717.55px;width:12.5px;height:15.43px;background:#4b6f6d;border-top:1px solid rgba(0,0,0,0.28)"></div><div class="a" style="left:1712.5px;top:732.98px;width:12.5px;height:15.43px;background:#3f8a7a;border-top:1px solid rgba(0,0,0,0.28)"></div><div class="a" style="left:1712.5px;top:748.41px;width:12.5px;height:15.43px;background:#73a09a;border-top:1px solid rgba(0,0,0,0.28)"></div><div class="a" style="left:1712.5px;top:763.84px;width:12.5px;height:15.43px;background:#4fae8e;border-top:1px solid rgba(0,0,0,0.28)"></div><div class="a" style="left:1712.5px;top:779.27px;width:12.5px;height:15.43px;background:#5aab78;border-top:1px solid rgba(0,0,0,0.28)"></div><div class="a" style="left:1712.5px;top:794.70px;width:12.5px;height:15.43px;background:#4fbecf;border-top:1px solid rgba(0,0,0,0.28)"></div><div class="a" style="left:1712.5px;top:810.13px;width:12.5px;height:15.43px;background:#4aa5b8;border-top:1px solid rgba(0,0,0,0.28)"></div><div class="a" style="left:1712.5px;top:825.56px;width:12.5px;height:15.43px;background:#b7cdbf;border-top:1px solid rgba(0,0,0,0.28)"></div><div class="a" style="left:1712.5px;top:840.99px;width:12.5px;height:15.43px;background:#d4ead4;border-top:1px solid rgba(0,0,0,0.28)"></div><div class="a" style="left:1712.5px;top:856.42px;width:12.5px;height:0.08px;background:#a8d8a0;border-top:1px solid rgba(0,0,0,0.28)"></div>
<!-- bottom page nav row -->
<div class="a" style="left:26px;top:860px;width:1400px;height:34px;background:#f2f2f2"></div>
<div class="a" style="left:26px;top:168px;width:16px;height:692px;background:transparent"></div>
<div class="a" style="left:42px;top:860px;width:692px;height:16px;border-top:1px solid #8c8c8c;border-right:1px solid #8c8c8c;background:#f2f2f2"></div>
<div class="a" style="left:734px;top:861px;width:675px;height:14px;background:#efefef"></div>
<div class="a" style="left:749px;top:867px;width:645px;height:2px;background:#7f7f7f"></div>
<div class="a" style="left:26px;top:875.5px;width:1400px;height:1px;background:#e2e2e2"></div>
<div class="a" style="left:1410px;top:860px;width:14px;height:16px;background:#fff"></div>
<svg style="left:0;top:0" width="1725" height="932">
<!-- nav icons -->
<g fill="none" stroke="#777" stroke-width="1">
<path d="M45.5 866.5 h6 v6 h-7 v-5z M48 869.5 h3 M49.5 868 v3"/>
<path d="M157.5 866.5 h6 v6 h-7 v-5z M160 869.5 h3 M161.5 868 v3"/>
</g>
<path d="M59.5 864.5 v8" stroke="#bbb" stroke-width="1.3"/>
<path d="M68 864.5 v8 l-7 -4z" fill="#c4c4c4"/>
<path d="M82.5 864.5 v8 l-7 -4z" fill="#c4c4c4"/>
<path d="M128.5 864.5 v8.5 l7 -4.25z" fill="#111"/>
<path d="M142 864.5 v8.5 l7 -4.25z" fill="#111"/>
<path d="M150.5 864.5 v8.5" stroke="#111" stroke-width="1.5"/>
<!-- page tabs -->
<path d="M176 860.5 L181 875.5 H214.5 L217 860.5" fill="#fff" stroke="#8c8c8c" stroke-width="1"/>
<path d="M177 860.5 H216" stroke="#fff" stroke-width="1.5"/>
<path d="M216.5 875.5 L221 861 H255 L251 875.5 Z" fill="#d2d2d2" stroke="#a0a0a0" stroke-width="1"/>
<path d="M255 860.5 H734" stroke="#8c8c8c" stroke-width="1"/>
<path d="M728.5 863 v1 M730.5 865 v1 M728.5 867 v1 M730.5 869 v1 M728.5 871 v1" stroke="#999" stroke-width="1"/>
<!-- color row -->
<path d="M28.5 878 v1 M30.5 880 v1 M28.5 882 v1 M30.5 884 v1 M28.5 886 v1 M30.5 888 v1 M28.5 890 v1" stroke="#bbb" stroke-width="1"/>
<path d="M39 882 v6 l3.5 -3z" fill="#555"/>
<path d="M55 890.5 L61 884.5" stroke="#c85a1a" stroke-width="2" stroke-linecap="round"/>
<path d="M60 882.5 l2.5 -2.5 a1.5 1.5 0 0 1 2.5 2.5 l-2.5 2.5 z" fill="#333"/>
<path d="M59.5 882 l4 4" stroke="#333" stroke-width="1.2"/>
<path d="M77.5 881 l-4 4 l4 4" fill="none" stroke="#c8c8c8" stroke-width="1.2"/>
<rect x="84.5" y="877.5" width="15" height="15.5" fill="#fff" stroke="#7a7a7a"/>
<path d="M86.5 891 L97.5 879.5" stroke="#e03030" stroke-width="0.9"/>
<rect x="99.5" y="877.5" width="15" height="15.5" fill="#9b9b9b" stroke="#7a7a7a"/>
<!-- zoom icon -->
<circle cx="1415" cy="867" r="4" fill="none" stroke="#333" stroke-width="1"/>
<path d="M1418 870 l3 3" stroke="#333" stroke-width="1.5"/>
<path d="M1413 867 h4 M1415 865 v4" stroke="#333" stroke-width="0.7"/>
<path d="M1391 881.5 l4 3.5 l-4 3.5" fill="none" stroke="#c3c3c3" stroke-width="1.1"/>
<path d="M1407 882 l3 3 l-3 3 M1410.5 882 l3 3 l-3 3" fill="none" stroke="#bbb" stroke-width="1"/>
</svg>
<div class="t" style="left:88.5px;top:862.5px;font-size:11.5px;color:#b5b5b5">1</div><div class="t" style="left:98.5px;top:862.5px;font-size:11.5px;color:#b5b5b5">的</div><div class="t" style="left:115.5px;top:862.5px;font-size:11.5px;color:#b5b5b5">2</div>
<div class="t" style="left:186px;top:861.5px;font-size:12px;color:#111">页 1</div>
<div class="t" style="left:223.5px;top:861.5px;font-size:12px;color:#888">页 2</div>
<!-- status bar -->
<div class="a" style="left:0;top:894px;width:1725px;height:35px;background:#f2f2f2;border-top:1px solid #dadada"></div>
<div class="a" style="left:0;top:928.5px;width:1725px;height:3.5px;background:#dde5f2"></div>
<svg style="left:0;top:0" width="1725" height="932">
<g transform="translate(14 911.5)"><circle r="5.2" fill="none" stroke="#222" stroke-width="3.4" stroke-dasharray="2.4 1.7"/><circle r="4.5" fill="none" stroke="#222" stroke-width="2.3"/></g>
<path d="M20 919 l3 -3 v3z" fill="#555"/>
<!-- fill -->
<path d="M1297 904.5 l7 7 l-7 7 l-7 -7z" fill="#fff" stroke="#222" stroke-width="1.4"/>
<path d="M1293.5 911.5 h7 l-3.5 2.5z" fill="#e01010"/>
<path d="M1304 913 l0.5 5.5 h-4.5z" fill="#e01010"/>
<rect x="1306" y="902" width="20" height="19" fill="#9d9d9d" stroke="#bbb" stroke-width="0.6"/>
<!-- pen -->
<path d="M1478.6 904 l-3.2 6.5 l2 3.5 h2.4 l2 -3.5 z M1477.4 914 v4.5 h2.4 v-4.5" fill="none" stroke="#333" stroke-width="1"/>
<rect x="1486" y="902" width="19" height="19" fill="#231815"/>
<rect x="1695" y="902" width="1" height="19" fill="#d5d5d5"/>
<!-- monitor -->
<rect x="1705" y="904" width="14" height="11" fill="#2a9ad8" stroke="#333" stroke-width="1"/>
<rect x="1706" y="905" width="12" height="4" fill="#e02020"/>
<ellipse cx="1712" cy="909.5" rx="3.5" ry="2" fill="#fff" stroke="#333" stroke-width="0.7"/>
<path d="M1709 917.5 h6 M1707 919 h10" stroke="#333" stroke-width="1"/>
</svg>
<div class="t" style="left:29px;top:906px;font-size:11.5px;color:#111;transform-origin:0 0;transform:scaleX(0.972)">双击工具可打开工具箱选项；按住 Ctrl 键拖动可限制为圆形；按住 Shift 键拖动可从中心绘制</div>
<div class="t" style="left:527.5px;top:906px;font-size:11.5px;color:#111;transform-origin:0 0;transform:scaleX(0.96)">椭圆形 于 桌面</div>
<div class="t" style="left:1330px;top:906px;font-size:11px;color:#111;word-spacing:0">C: &nbsp;&nbsp;0 M: &nbsp;&nbsp;0 Y: &nbsp;&nbsp;0 K: &nbsp;&nbsp;50</div>
<div class="t" style="left:1509px;top:906px;font-size:11px;color:#111">C: &nbsp;&nbsp;0 M: &nbsp;&nbsp;0 Y: &nbsp;&nbsp;0 K: &nbsp;&nbsp;100</div>
<div class="a" style="left:1421px;top:182px;width:35px;height:33px;border:3px solid #fe2b2b"></div>
<div class="a" style="left:1426.3px;top:418px;width:186.7px;height:54.6px;border:3px solid #fe2b2b"></div>
<div class="a" style="left:1683px;top:140px;width:34px;height:108px;border:3px solid #fe2b2b"></div>
</body></html>
